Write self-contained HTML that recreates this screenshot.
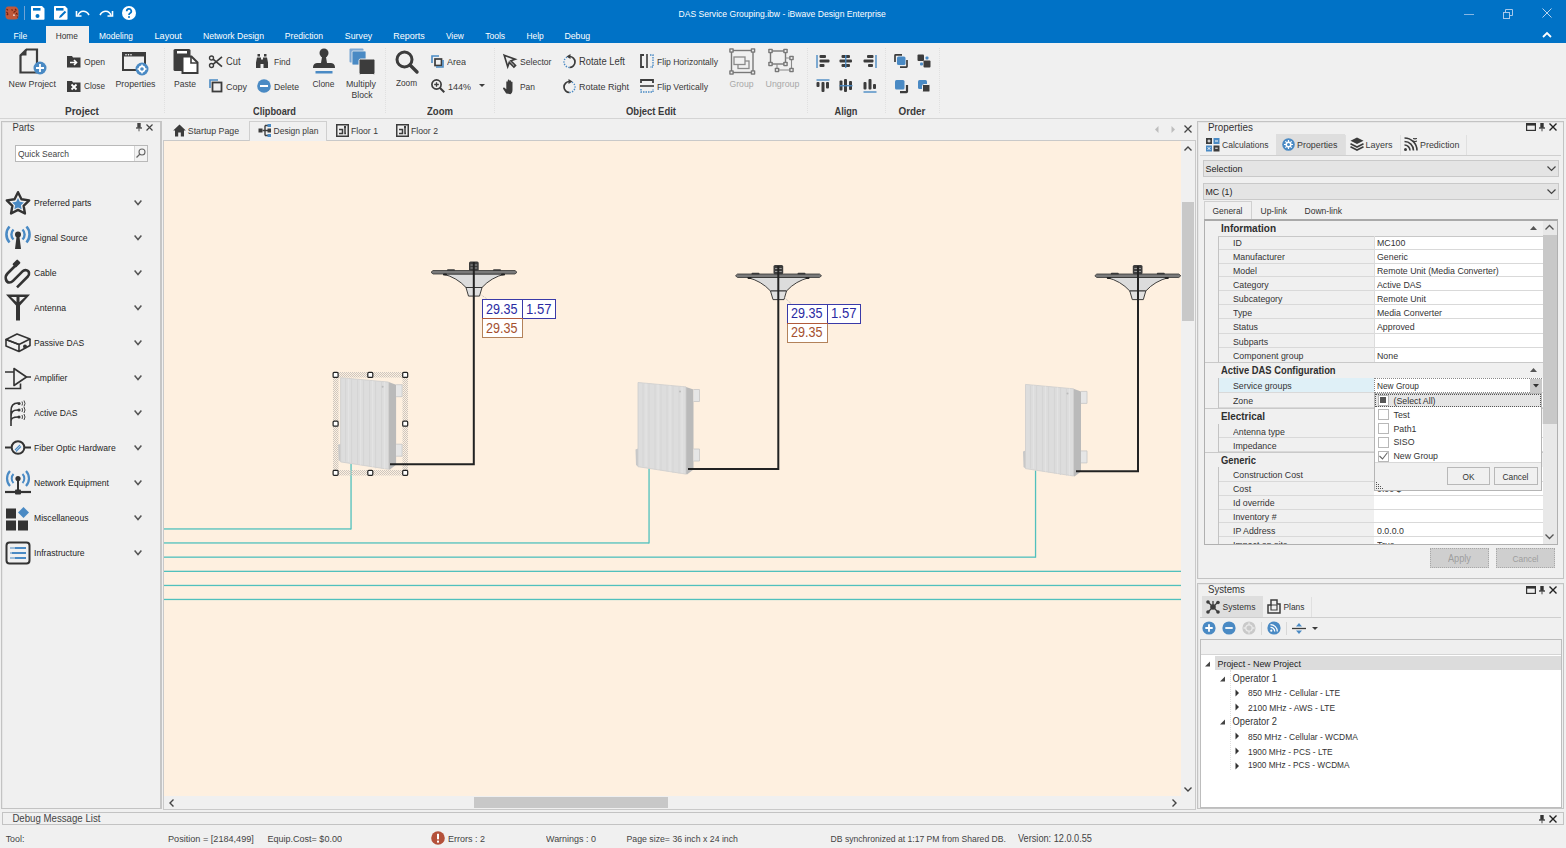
<!DOCTYPE html>
<html><head><meta charset="utf-8"><title>iBwave Design</title>
<style>
html,body{margin:0;padding:0;}
body{width:1566px;height:848px;position:relative;overflow:hidden;background:#f0f0f0;font-family:"Liberation Sans", sans-serif;}
svg{overflow:visible}
</style></head><body>
<div style="position:absolute;left:0px;top:0px;width:1566px;height:43px;background:#0072c6"></div>
<svg style="position:absolute;left:5px;top:6px" width="14" height="14" viewBox="0 0 14 14"><path d="M3 0.5h6.5c2 0 4 2 4 4.5v5c0 2.5-1.5 3.5-3.5 3.5h-6c-2 0-3.5-1.5-3.5-3.5v-6c0-2 1-3.5 2.5-3.5z" fill="#c0583a"/><path d="M1.5 2.8l1.5 1.5M1.5 6l1.3 1.3M1.8 9l1.5-1.2M6.5 3.5l1.2 1M10 3l1.5 1.5M8.5 6.5l2-1.5M11 7l1.5 1.5M9 9.5l1.5-1M12 10.5l.8 1" stroke="#6e2012" stroke-width="1.1"/><rect x="8" y="8.5" width="2.2" height="1.3" fill="#f3e6e0"/></svg>
<div style="position:absolute;left:23.5px;top:6px;width:1.5px;height:13.5px;background:#6fa3d6"></div>
<svg style="position:absolute;left:31px;top:6px" width="14" height="14" viewBox="0 0 14 14"><path d="M1 0h10l2.5 2.5v10.5a.8.8 0 0 1-.8.8h-11.9a.8.8 0 0 1-.8-.8v-12.2a.8.8 0 0 1 .8-.8z" fill="#fff"/><rect x="2" y="2" width="7.5" height="2.6" fill="#0072c6"/><circle cx="6.5" cy="10" r="2" fill="#0072c6"/></svg>
<svg style="position:absolute;left:54px;top:6px" width="14" height="14" viewBox="0 0 14 14"><path d="M1 0h10l2.5 2.5v10.5a.8.8 0 0 1-.8.8h-11.9a.8.8 0 0 1-.8-.8v-12.2a.8.8 0 0 1 .8-.8z" fill="#fff"/><rect x="2" y="2" width="7.5" height="2.6" fill="#0072c6"/><path d="M5 12l.8-2.2l5-5l1.4 1.4l-5 5z" fill="#0072c6"/></svg>
<svg style="position:absolute;left:76px;top:9px" width="14" height="8" viewBox="0 0 14 8"><path d="M2 6.5 C4 1 10 1 13 6" stroke="#fff" stroke-width="1.6" fill="none"/><path d="M0.5 2v5h5" stroke="#fff" stroke-width="1.6" fill="none"/></svg>
<svg style="position:absolute;left:99px;top:9px" width="14" height="8" viewBox="0 0 14 8"><path d="M12 6.5 C10 1 4 1 1 6" stroke="#fff" stroke-width="1.6" fill="none"/><path d="M13.5 2v5h-5" stroke="#fff" stroke-width="1.6" fill="none"/></svg>
<svg style="position:absolute;left:122px;top:6px" width="14" height="14" viewBox="0 0 14 14"><circle cx="7" cy="7" r="7" fill="#fff"/><path d="M4.7 5.2a2.3 2.3 0 1 1 3.3 2.1c-0.8 0.4-1 0.8-1 1.6" stroke="#0072c6" stroke-width="1.7" fill="none"/><circle cx="7" cy="11" r="1" fill="#0072c6"/></svg>
<div style="position:absolute;left:678.50px;top:6.90px;font-size:8.58px;line-height:14px;font-weight:normal;color:#ffffff;white-space:nowrap;transform:scaleY(1.09);">DAS Service Grouping.ibw - iBwave Design Enterprise</div>
<div style="position:absolute;left:1464px;top:14px;width:10px;height:1px;background:#86b6e3"></div>
<svg style="position:absolute;left:1503px;top:9px" width="10" height="10" viewBox="0 0 10 10"><rect x="0.5" y="3.5" width="6" height="6" fill="none" stroke="#a8c8ea" stroke-width="1"/><path d="M2.5 3.5v-3h7v6h-3" fill="none" stroke="#a8c8ea" stroke-width="1"/></svg>
<svg style="position:absolute;left:1542px;top:8px" width="10" height="10" viewBox="0 0 10 10"><path d="M0.5 0.5l9 9M9.5 0.5l-9 9" stroke="#b9d4ef" stroke-width="1"/></svg>
<div style="position:absolute;left:46px;top:26px;width:43px;height:17px;background:#f0f0f0"></div>
<div style="position:absolute;left:13.50px;top:29.40px;font-size:8.56px;line-height:14px;font-weight:normal;color:#ffffff;white-space:nowrap;transform:scaleY(1.09);">File</div>
<div style="position:absolute;left:55.70px;top:29.40px;font-size:8.32px;line-height:14px;font-weight:normal;color:#333333;white-space:nowrap;transform:scaleY(1.09);">Home</div>
<div style="position:absolute;left:99.00px;top:29.40px;font-size:8.38px;line-height:14px;font-weight:normal;color:#ffffff;white-space:nowrap;transform:scaleY(1.09);">Modeling</div>
<div style="position:absolute;left:154.50px;top:29.40px;font-size:9.12px;line-height:14px;font-weight:normal;color:#ffffff;white-space:nowrap;transform:scaleY(1.09);">Layout</div>
<div style="position:absolute;left:202.90px;top:29.40px;font-size:8.66px;line-height:14px;font-weight:normal;color:#ffffff;white-space:nowrap;transform:scaleY(1.09);">Network Design</div>
<div style="position:absolute;left:284.80px;top:29.40px;font-size:8.61px;line-height:14px;font-weight:normal;color:#ffffff;white-space:nowrap;transform:scaleY(1.09);">Prediction</div>
<div style="position:absolute;left:344.80px;top:29.40px;font-size:8.80px;line-height:14px;font-weight:normal;color:#ffffff;white-space:nowrap;transform:scaleY(1.09);">Survey</div>
<div style="position:absolute;left:393.30px;top:29.40px;font-size:8.97px;line-height:14px;font-weight:normal;color:#ffffff;white-space:nowrap;transform:scaleY(1.09);">Reports</div>
<div style="position:absolute;left:445.90px;top:29.40px;font-size:8.33px;line-height:14px;font-weight:normal;color:#ffffff;white-space:nowrap;transform:scaleY(1.09);">View</div>
<div style="position:absolute;left:485.20px;top:29.40px;font-size:8.56px;line-height:14px;font-weight:normal;color:#ffffff;white-space:nowrap;transform:scaleY(1.09);">Tools</div>
<div style="position:absolute;left:526.40px;top:29.40px;font-size:8.41px;line-height:14px;font-weight:normal;color:#ffffff;white-space:nowrap;transform:scaleY(1.09);">Help</div>
<div style="position:absolute;left:564.40px;top:29.40px;font-size:8.76px;line-height:14px;font-weight:normal;color:#ffffff;white-space:nowrap;transform:scaleY(1.09);">Debug</div>
<svg style="position:absolute;left:1542px;top:32px" width="10" height="6" viewBox="0 0 10 6"><path d="M1 5l4-4l4 4" stroke="#fff" stroke-width="1.8" fill="none"/></svg>
<div style="position:absolute;left:0px;top:118px;width:1566px;height:1px;background:#d4d4d4"></div>
<div style="position:absolute;left:164px;top:48px;width:1px;height:65px;border-left:1px dotted #e0e0e0"></div>
<div style="position:absolute;left:385px;top:48px;width:1px;height:65px;border-left:1px dotted #e0e0e0"></div>
<div style="position:absolute;left:494px;top:48px;width:1px;height:65px;border-left:1px dotted #e0e0e0"></div>
<div style="position:absolute;left:807px;top:48px;width:1px;height:65px;border-left:1px dotted #e0e0e0"></div>
<div style="position:absolute;left:885px;top:48px;width:1px;height:65px;border-left:1px dotted #e0e0e0"></div>
<div style="position:absolute;left:939px;top:48px;width:1px;height:65px;border-left:1px dotted #e0e0e0"></div>
<div style="position:absolute;left:65.00px;top:104.60px;font-size:10.03px;line-height:14px;font-weight:bold;color:#3a3a3a;white-space:nowrap;transform:scaleY(1.09);">Project</div>
<div style="position:absolute;left:253.00px;top:104.60px;font-size:9.21px;line-height:14px;font-weight:bold;color:#3a3a3a;white-space:nowrap;transform:scaleY(1.09);">Clipboard</div>
<div style="position:absolute;left:427.00px;top:104.60px;font-size:9.55px;line-height:14px;font-weight:bold;color:#3a3a3a;white-space:nowrap;transform:scaleY(1.09);">Zoom</div>
<div style="position:absolute;left:626.00px;top:104.60px;font-size:9.47px;line-height:14px;font-weight:bold;color:#3a3a3a;white-space:nowrap;transform:scaleY(1.09);">Object Edit</div>
<div style="position:absolute;left:834.50px;top:104.60px;font-size:9.20px;line-height:14px;font-weight:bold;color:#3a3a3a;white-space:nowrap;transform:scaleY(1.09);">Align</div>
<div style="position:absolute;left:898.50px;top:104.60px;font-size:9.91px;line-height:14px;font-weight:bold;color:#3a3a3a;white-space:nowrap;transform:scaleY(1.09);">Order</div>
<svg style="position:absolute;left:19px;top:48px" width="28" height="27" viewBox="0 0 28 27"><path d="M7 1.5h11v14M18 24.5h-16.5v-17l6-6" fill="none" stroke="#3c3c3c" stroke-width="2.2"/><path d="M1.5 7.5h6v-6z" fill="#3c3c3c"/><circle cx="21" cy="20" r="6.5" fill="#4a8ac4"/><path d="M21 16v8M17 20h8" stroke="#fff" stroke-width="1.8"/></svg>
<div style="position:absolute;left:8.60px;top:77.00px;font-size:8.79px;line-height:14px;font-weight:normal;color:#383838;white-space:nowrap;transform:scaleY(1.09);">New Project</div>
<svg style="position:absolute;left:67px;top:55px" width="14" height="13" viewBox="0 0 14 13"><path d="M0 1h5l1 1.5h7.5v10h-13.5z" fill="#3c3c3c"/><path d="M3 7.5h6M7 5l2.5 2.5L7 10" stroke="#fff" stroke-width="1.6" fill="none"/></svg>
<div style="position:absolute;left:84.00px;top:54.90px;font-size:8.58px;line-height:14px;font-weight:normal;color:#383838;white-space:nowrap;transform:scaleY(1.09);">Open</div>
<svg style="position:absolute;left:67px;top:80px" width="14" height="12" viewBox="0 0 14 12"><path d="M0 1h5l1 1.5h7.5v9.5h-13.5z" fill="#3c3c3c"/><path d="M4.5 4.5l5 5M9.5 4.5l-5 5" stroke="#fff" stroke-width="1.8"/></svg>
<div style="position:absolute;left:84.00px;top:79.80px;font-size:8.21px;line-height:14px;font-weight:normal;color:#383838;white-space:nowrap;transform:scaleY(1.09);">Close</div>
<svg style="position:absolute;left:122px;top:52px" width="28" height="24" viewBox="0 0 28 24"><rect x="1" y="1" width="22" height="17" fill="none" stroke="#3c3c3c" stroke-width="2"/><rect x="1" y="1" width="22" height="3.5" fill="#3c3c3c"/><circle cx="4" cy="2.8" r=".8" fill="#fff"/><circle cx="6.5" cy="2.8" r=".8" fill="#fff"/><circle cx="9" cy="2.8" r=".8" fill="#fff"/><circle cx="20" cy="17" r="6.5" fill="#4a8ac4"/><circle cx="20" cy="17" r="2.6" fill="none" stroke="#fff" stroke-width="1.6"/><path d="M20 12.5v2M20 19.5v2M15.5 17h2M22.5 17h2" stroke="#fff" stroke-width="1.4"/></svg>
<div style="position:absolute;left:115.50px;top:77.00px;font-size:8.78px;line-height:14px;font-weight:normal;color:#383838;white-space:nowrap;transform:scaleY(1.09);">Properties</div>
<svg style="position:absolute;left:173px;top:48px" width="27" height="27" viewBox="0 0 27 27"><rect x="0.5" y="1" width="17" height="22" rx="1.5" fill="#3c3c3c"/><rect x="4" y="3" width="10" height="2.5" fill="#fff"/><path d="M9.5 8.5h9l6 6v10.5h-15z" fill="#fff" stroke="#3c3c3c" stroke-width="2"/><path d="M18 8.5v6.5h6.5" fill="none" stroke="#3c3c3c" stroke-width="1.6"/></svg>
<div style="position:absolute;left:174.00px;top:77.20px;font-size:8.60px;line-height:14px;font-weight:normal;color:#383838;white-space:nowrap;transform:scaleY(1.09);">Paste</div>
<svg style="position:absolute;left:209px;top:55px" width="14" height="14" viewBox="0 0 14 14"><circle cx="2.5" cy="3" r="2" fill="none" stroke="#3c3c3c" stroke-width="1.4"/><circle cx="2.5" cy="10.5" r="2" fill="none" stroke="#3c3c3c" stroke-width="1.4"/><path d="M4 4.2l9 7.5M4 9.3l9-7.5" stroke="#3c3c3c" stroke-width="1.7"/></svg>
<div style="position:absolute;left:226.00px;top:54.90px;font-size:9.32px;line-height:14px;font-weight:normal;color:#383838;white-space:nowrap;transform:scaleY(1.09);">Cut</div>
<svg style="position:absolute;left:209px;top:79px" width="14" height="14" viewBox="0 0 14 14"><path d="M1 9v-8h8" fill="none" stroke="#4a8ac4" stroke-width="1.6"/><rect x="3.5" y="3.5" width="9" height="9" fill="none" stroke="#3c3c3c" stroke-width="1.8"/></svg>
<div style="position:absolute;left:226.00px;top:79.80px;font-size:8.99px;line-height:14px;font-weight:normal;color:#383838;white-space:nowrap;transform:scaleY(1.09);">Copy</div>
<svg style="position:absolute;left:256px;top:54px" width="12" height="14" viewBox="0 0 12 14"><rect x="1.5" y="0" width="2.5" height="2.5" fill="#3c3c3c"/><rect x="8" y="0" width="2.5" height="2.5" fill="#3c3c3c"/><path d="M1 3.5h4v2h2v-2h4l1 5v5.5h-4.5v-4h-3v4h-4.5v-5.5z" fill="#3c3c3c"/></svg>
<div style="position:absolute;left:274.00px;top:54.90px;font-size:8.48px;line-height:14px;font-weight:normal;color:#383838;white-space:nowrap;transform:scaleY(1.09);">Find</div>
<svg style="position:absolute;left:257px;top:79px" width="14" height="14" viewBox="0 0 14 14"><circle cx="7" cy="7" r="6.8" fill="#4a8ac4"/><rect x="3" y="6" width="8" height="2" fill="#fff"/></svg>
<div style="position:absolute;left:274.00px;top:79.80px;font-size:8.65px;line-height:14px;font-weight:normal;color:#383838;white-space:nowrap;transform:scaleY(1.09);">Delete</div>
<svg style="position:absolute;left:312px;top:48px" width="24" height="27" viewBox="0 0 24 27"><circle cx="12" cy="5" r="4.5" fill="#3c3c3c"/><path d="M10 9h4l1 6h-6z" fill="#3c3c3c"/><path d="M1 20c0-4 2-5 5-5h12c3 0 5 1 5 5z" fill="#3c3c3c"/><rect x="3.5" y="23" width="17" height="2.5" fill="#4a8ac4"/></svg>
<div style="position:absolute;left:312.50px;top:77.20px;font-size:8.42px;line-height:14px;font-weight:normal;color:#383838;white-space:nowrap;transform:scaleY(1.09);">Clone</div>
<svg style="position:absolute;left:349px;top:48px" width="27" height="27" viewBox="0 0 27 27"><rect x="0.5" y="0.5" width="14" height="14" rx="1" fill="#7ba7d4"/><rect x="3" y="3" width="14" height="14" rx="1" fill="#4a8ac4" stroke="#f0f0f0" stroke-width=".8"/><rect x="10" y="11" width="16" height="15.5" rx="1.5" fill="#3c3c3c" stroke="#f0f0f0" stroke-width="1"/></svg>
<div style="position:absolute;left:346.00px;top:77.00px;font-size:8.85px;line-height:14px;font-weight:normal;color:#383838;white-space:nowrap;transform:scaleY(1.09);">Multiply</div>
<div style="position:absolute;left:351.50px;top:88.10px;font-size:8.59px;line-height:14px;font-weight:normal;color:#383838;white-space:nowrap;transform:scaleY(1.09);">Block</div>
<svg style="position:absolute;left:395px;top:50px" width="24" height="24" viewBox="0 0 24 24"><circle cx="9.5" cy="9.5" r="7.5" fill="none" stroke="#3c3c3c" stroke-width="3"/><path d="M15 15l7 7" stroke="#3c3c3c" stroke-width="3.4" stroke-linecap="round"/></svg>
<div style="position:absolute;left:396.00px;top:77.00px;font-size:8.22px;line-height:14px;font-weight:normal;color:#383838;white-space:nowrap;transform:scaleY(1.09);">Zoom</div>
<svg style="position:absolute;left:431px;top:55px" width="13" height="13" viewBox="0 0 13 13"><path d="M1 8v-7h7" fill="none" stroke="#4a8ac4" stroke-width="1.6"/><rect x="4" y="4" width="6.5" height="6.5" fill="none" stroke="#3c3c3c" stroke-width="1.7"/><path d="M12 5v7h-7" fill="none" stroke="#4a8ac4" stroke-width="1.6"/></svg>
<div style="position:absolute;left:447.00px;top:54.90px;font-size:8.99px;line-height:14px;font-weight:normal;color:#383838;white-space:nowrap;transform:scaleY(1.09);">Area</div>
<svg style="position:absolute;left:431px;top:79px" width="14" height="14" viewBox="0 0 14 14"><circle cx="5.5" cy="5.5" r="4.6" fill="none" stroke="#3c3c3c" stroke-width="1.7"/><path d="M8.8 8.8l4.5 4.5" stroke="#3c3c3c" stroke-width="2"/><path d="M5.5 3.2v4.6M3.2 5.5h4.6" stroke="#3c3c3c" stroke-width="1.3"/></svg>
<div style="position:absolute;left:448.00px;top:79.80px;font-size:8.99px;line-height:14px;font-weight:normal;color:#383838;white-space:nowrap;transform:scaleY(1.09);">144%</div>
<svg style="position:absolute;left:479px;top:84px" width="6" height="4" viewBox="0 0 6 4"><path d="M0 0h6l-3 3z" fill="#3c3c3c"/></svg>
<svg style="position:absolute;left:503px;top:54px" width="14" height="14" viewBox="0 0 14 14"><path d="M1.2 1.2l11 4l-4.3 1.6l4.6 4.6l-1.6 1.6l-4.6-4.6l-1.6 4.3z" fill="none" stroke="#3c3c3c" stroke-width="1.7" stroke-linejoin="miter"/></svg>
<div style="position:absolute;left:520.00px;top:54.90px;font-size:8.59px;line-height:14px;font-weight:normal;color:#383838;white-space:nowrap;transform:scaleY(1.09);">Selector</div>
<svg style="position:absolute;left:503px;top:79px" width="14" height="15" viewBox="0 0 14 15"><path d="M3.2 14.5l-3-4.5c-.6-.9.4-1.9 1.3-1.2l1.8 1.5v-7.3c0-1 1.5-1 1.5 0v5.5v-7.3c0-1 1.6-1 1.6 0v7.3v-6.5c0-1 1.6-1 1.6 0v6.5v-5.3c0-1 1.5-1 1.5 0v7.8c0 2.2-.9 3.5-2 4.2z" fill="#3c3c3c"/></svg>
<div style="position:absolute;left:520.00px;top:79.80px;font-size:8.43px;line-height:14px;font-weight:normal;color:#383838;white-space:nowrap;transform:scaleY(1.09);">Pan</div>
<svg style="position:absolute;left:563px;top:54px" width="13" height="14" viewBox="0 0 13 14"><path d="M6.5 2.5a5.5 5.5 0 0 1 0 11" fill="none" stroke="#3c3c3c" stroke-width="1.7"/><path d="M6.5 13.5a5.5 5.5 0 0 1 0-11" fill="none" stroke="#4a8ac4" stroke-width="1.4" stroke-dasharray="1.3 1.3"/><path d="M7.5 0l-4 2.5l4 2.5z" fill="#3c3c3c"/></svg>
<div style="position:absolute;left:579.00px;top:54.90px;font-size:9.40px;line-height:14px;font-weight:normal;color:#383838;white-space:nowrap;transform:scaleY(1.09);">Rotate Left</div>
<svg style="position:absolute;left:563px;top:79px" width="13" height="14" viewBox="0 0 13 14"><path d="M6.5 2.5a5.5 5.5 0 0 0 0 11" fill="none" stroke="#3c3c3c" stroke-width="1.7"/><path d="M6.5 13.5a5.5 5.5 0 0 0 0-11" fill="none" stroke="#4a8ac4" stroke-width="1.4" stroke-dasharray="1.3 1.3"/><path d="M5.5 0l4 2.5l-4 2.5z" fill="#3c3c3c"/></svg>
<div style="position:absolute;left:579.00px;top:79.80px;font-size:8.99px;line-height:14px;font-weight:normal;color:#383838;white-space:nowrap;transform:scaleY(1.09);">Rotate Right</div>
<svg style="position:absolute;left:640px;top:54px" width="14" height="14" viewBox="0 0 14 14"><path d="M4 1h-3v12h3" fill="none" stroke="#3c3c3c" stroke-width="1.8"/><path d="M7 0v14" stroke="#3c3c3c" stroke-width="1.6"/><path d="M10 1h3v12h-3" fill="none" stroke="#4a8ac4" stroke-width="1.4" stroke-dasharray="1.5 1"/></svg>
<div style="position:absolute;left:657.00px;top:54.90px;font-size:8.57px;line-height:14px;font-weight:normal;color:#383838;white-space:nowrap;transform:scaleY(1.09);">Flip Horizontally</div>
<svg style="position:absolute;left:640px;top:79px" width="14" height="14" viewBox="0 0 14 14"><path d="M1 4v-3h12v3" fill="none" stroke="#3c3c3c" stroke-width="1.8"/><path d="M0 7h14" stroke="#3c3c3c" stroke-width="1.6"/><path d="M1 10v3h12v-3" fill="none" stroke="#4a8ac4" stroke-width="1.4" stroke-dasharray="1.5 1"/></svg>
<div style="position:absolute;left:657.00px;top:79.80px;font-size:8.66px;line-height:14px;font-weight:normal;color:#383838;white-space:nowrap;transform:scaleY(1.09);">Flip Vertically</div>
<svg style="position:absolute;left:729px;top:48px" width="27" height="27" viewBox="0 0 27 27"><rect x="2.5" y="2.5" width="21.5" height="22" fill="none" stroke="#787878" stroke-width="1.4"/><rect x="0.20000000000000018" y="0.20000000000000018" width="4.6" height="4.6" rx="0.8" fill="#787878"/><rect x="1.6" y="1.6" width="1.8" height="1.8" fill="#f0f0f0"/><rect x="21.7" y="0.20000000000000018" width="4.6" height="4.6" rx="0.8" fill="#787878"/><rect x="23.1" y="1.6" width="1.8" height="1.8" fill="#f0f0f0"/><rect x="0.20000000000000018" y="22.2" width="4.6" height="4.6" rx="0.8" fill="#787878"/><rect x="1.6" y="23.6" width="1.8" height="1.8" fill="#f0f0f0"/><rect x="21.7" y="22.2" width="4.6" height="4.6" rx="0.8" fill="#787878"/><rect x="23.1" y="23.6" width="1.8" height="1.8" fill="#f0f0f0"/><rect x="9" y="13" width="11" height="7.5" fill="none" stroke="#8a8a8a" stroke-width="1.3"/><rect x="5" y="9" width="11" height="7.5" fill="#f0f0f0" stroke="#8a8a8a" stroke-width="1.3"/></svg>
<div style="position:absolute;left:729.50px;top:77.00px;font-size:8.63px;line-height:14px;font-weight:normal;color:#a8a8a8;white-space:nowrap;transform:scaleY(1.09);">Group</div>
<svg style="position:absolute;left:769px;top:48px" width="26" height="27" viewBox="0 0 26 27"><rect x="1.5" y="3" width="15" height="13" fill="none" stroke="#787878" stroke-width="1.4"/><path d="M16.5 10h6v12h-14.5v-6" fill="none" stroke="#8a8a8a" stroke-width="1.1"/><rect x="-0.7999999999999998" y="0.7000000000000002" width="4.6" height="4.6" rx="0.8" fill="#787878"/><rect x="0.6" y="2.1" width="1.8" height="1.8" fill="#f0f0f0"/><rect x="14.2" y="0.7000000000000002" width="4.6" height="4.6" rx="0.8" fill="#787878"/><rect x="15.6" y="2.1" width="1.8" height="1.8" fill="#f0f0f0"/><rect x="-0.7999999999999998" y="13.7" width="4.6" height="4.6" rx="0.8" fill="#787878"/><rect x="0.6" y="15.1" width="1.8" height="1.8" fill="#f0f0f0"/><rect x="14.2" y="13.7" width="4.6" height="4.6" rx="0.8" fill="#787878"/><rect x="15.6" y="15.1" width="1.8" height="1.8" fill="#f0f0f0"/><rect x="20.2" y="7.7" width="4.6" height="4.6" rx="0.8" fill="#787878"/><rect x="21.6" y="9.1" width="1.8" height="1.8" fill="#f0f0f0"/><rect x="20.2" y="19.7" width="4.6" height="4.6" rx="0.8" fill="#787878"/><rect x="21.6" y="21.1" width="1.8" height="1.8" fill="#f0f0f0"/><rect x="5.7" y="19.7" width="4.6" height="4.6" rx="0.8" fill="#787878"/><rect x="7.1" y="21.1" width="1.8" height="1.8" fill="#f0f0f0"/></svg>
<div style="position:absolute;left:765.50px;top:77.00px;font-size:8.86px;line-height:14px;font-weight:normal;color:#a8a8a8;white-space:nowrap;transform:scaleY(1.09);">Ungroup</div>
<svg style="position:absolute;left:816px;top:54px" width="14" height="14" viewBox="0 0 14 14"><rect x="0.3" y="1" width="1.4" height="13" fill="#4a8ac4"/><rect x="3.5" y="1" width="6.5" height="3" rx="1" fill="#3c3c3c"/><rect x="3.5" y="5.5" width="10" height="3" rx="1" fill="#3c3c3c"/><rect x="3.5" y="10" width="5" height="3" rx="1" fill="#3c3c3c"/></svg>
<svg style="position:absolute;left:839px;top:54px" width="14" height="14" viewBox="0 0 14 14"><rect x="2.5" y="1" width="8.5" height="3" rx="1" fill="#3c3c3c"/><rect x="0.5" y="5.5" width="12.5" height="3" rx="1" fill="#3c3c3c"/><rect x="2.5" y="10" width="8.5" height="3" rx="1" fill="#3c3c3c"/><rect x="6.1" y="1" width="1.3" height="13" fill="#4a8ac4"/></svg>
<svg style="position:absolute;left:863px;top:54px" width="14" height="14" viewBox="0 0 14 14"><rect x="12.3" y="1" width="1.4" height="13" fill="#4a8ac4"/><rect x="4" y="1" width="6.5" height="3" rx="1" fill="#3c3c3c"/><rect x="0.5" y="5.5" width="10" height="3" rx="1" fill="#3c3c3c"/><rect x="5" y="10" width="5" height="3" rx="1" fill="#3c3c3c"/></svg>
<svg style="position:absolute;left:816px;top:79px" width="14" height="14" viewBox="0 0 14 14"><rect x="0.5" y="0.3" width="13" height="1.4" fill="#4a8ac4"/><rect x="0.5" y="3" width="3" height="5" rx="1" fill="#3c3c3c"/><rect x="5.5" y="3" width="3" height="10" rx="1" fill="#3c3c3c"/><rect x="10" y="3" width="3" height="6.5" rx="1" fill="#3c3c3c"/></svg>
<svg style="position:absolute;left:839px;top:79px" width="14" height="14" viewBox="0 0 14 14"><rect x="0.5" y="1.5" width="3" height="10" rx="1" fill="#3c3c3c"/><rect x="5" y="0" width="3" height="13" rx="1" fill="#3c3c3c"/><rect x="10" y="2" width="3" height="9" rx="1" fill="#3c3c3c"/><rect x="0.5" y="6.1" width="13" height="1.3" fill="#4a8ac4"/></svg>
<svg style="position:absolute;left:863px;top:79px" width="14" height="14" viewBox="0 0 14 14"><rect x="0.5" y="12.3" width="13" height="1.4" fill="#4a8ac4"/><rect x="0.5" y="3" width="3" height="7.5" rx="1" fill="#3c3c3c"/><rect x="5.5" y="0" width="3" height="10.5" rx="1" fill="#3c3c3c"/><rect x="10" y="5" width="3" height="5" rx="1" fill="#3c3c3c"/></svg>
<svg style="position:absolute;left:894px;top:54px" width="14" height="14" viewBox="0 0 14 14"><path d="M1 8v-6.5a.6.6 0 0 1 .6-.6h6.4" fill="none" stroke="#3c3c3c" stroke-width="1.7"/><path d="M13 6v6.5a.6.6 0 0 1-.6.6h-6.4" fill="none" stroke="#3c3c3c" stroke-width="1.7"/><rect x="3" y="2.5" width="8.5" height="8.5" rx="1.5" fill="#4a8ac4"/></svg>
<svg style="position:absolute;left:917px;top:54px" width="14" height="14" viewBox="0 0 14 14"><rect x="0.5" y="0.5" width="6.5" height="6.5" rx="1" fill="#3c3c3c"/><rect x="6.5" y="6.5" width="7" height="7" rx="1" fill="#3c3c3c"/><rect x="8.5" y="2.5" width="3" height="3" rx="1" fill="#4a8ac4"/><rect x="3" y="8.5" width="3" height="3" rx="1" fill="#4a8ac4"/></svg>
<svg style="position:absolute;left:894px;top:79px" width="14" height="14" viewBox="0 0 14 14"><path d="M13 6v6.5a.6.6 0 0 1-.6.6h-6.4" fill="none" stroke="#3c3c3c" stroke-width="2.2"/><rect x="1" y="1" width="9.5" height="9.5" rx="1.5" fill="#4a8ac4"/></svg>
<svg style="position:absolute;left:917px;top:79px" width="14" height="14" viewBox="0 0 14 14"><rect x="1" y="1" width="9" height="9" rx="1.5" fill="#4a8ac4"/><rect x="5.5" y="5.5" width="7.5" height="7.5" rx="1" fill="#3c3c3c" stroke="#f0f0f0" stroke-width="1"/></svg>
<div style="position:absolute;left:1px;top:121px;width:161px;height:688px;border:1px solid #c3c3c3;border-right:2px solid #c6c6c6;box-shadow:inset 1px 1px 0 #e6e6e6;box-sizing:border-box;background:#f0f0f0"></div>
<div style="position:absolute;left:12.40px;top:121.00px;font-size:9.42px;line-height:14px;font-weight:normal;color:#3a3a3a;white-space:nowrap;transform:scaleY(1.09);">Parts</div>
<svg style="position:absolute;left:136px;top:123px" width="6" height="8" viewBox="0 0 6 8"><rect x="1.3" y="0" width="3.4" height="4.8" fill="#444"/><path d="M0 5h6" stroke="#444" stroke-width="1.3"/><path d="M3 5.5v2.8" stroke="#555" stroke-width="1"/></svg>
<svg style="position:absolute;left:146px;top:124px" width="7" height="7" viewBox="0 0 7 7"><path d="M0.5 0.5l6 6M6.5 0.5l-6 6" stroke="#444" stroke-width="1.2"/></svg>
<div style="position:absolute;left:15px;top:145px;width:133px;height:17px;background:#fff;border:1px solid #b9b9b9;box-sizing:border-box"></div>
<div style="position:absolute;left:134px;top:146px;width:1px;height:15px;background:#d6d6d6"></div>
<div style="position:absolute;left:135px;top:146px;width:12px;height:15px;background:#f3f3f3"></div>
<svg style="position:absolute;left:136px;top:148px" width="10" height="10" viewBox="0 0 10 10"><circle cx="6" cy="4" r="3" fill="none" stroke="#666" stroke-width="1.1"/><path d="M4 6l-3.5 3.5" stroke="#666" stroke-width="1.2"/></svg>
<div style="position:absolute;left:18.00px;top:146.90px;font-size:8.50px;line-height:14px;font-weight:normal;color:#444;white-space:nowrap;transform:scaleY(1.09);">Quick Search</div>
<div style="position:absolute;left:34.00px;top:195.60px;font-size:8.60px;line-height:14px;font-weight:normal;color:#1e1e1e;white-space:nowrap;transform:scaleY(1.09);">Preferred parts</div>
<svg style="position:absolute;left:133.8px;top:199.7px" width="8" height="6" viewBox="0 0 8 6"><path d="M0.6 0.6l3.4 3.9l3.4-3.9" stroke="#555" stroke-width="1.5" fill="none"/></svg>
<div style="position:absolute;left:34.00px;top:230.60px;font-size:8.60px;line-height:14px;font-weight:normal;color:#1e1e1e;white-space:nowrap;transform:scaleY(1.09);">Signal Source</div>
<svg style="position:absolute;left:133.8px;top:234.7px" width="8" height="6" viewBox="0 0 8 6"><path d="M0.6 0.6l3.4 3.9l3.4-3.9" stroke="#555" stroke-width="1.5" fill="none"/></svg>
<div style="position:absolute;left:34.00px;top:265.60px;font-size:8.60px;line-height:14px;font-weight:normal;color:#1e1e1e;white-space:nowrap;transform:scaleY(1.09);">Cable</div>
<svg style="position:absolute;left:133.8px;top:269.7px" width="8" height="6" viewBox="0 0 8 6"><path d="M0.6 0.6l3.4 3.9l3.4-3.9" stroke="#555" stroke-width="1.5" fill="none"/></svg>
<div style="position:absolute;left:34.00px;top:300.60px;font-size:8.60px;line-height:14px;font-weight:normal;color:#1e1e1e;white-space:nowrap;transform:scaleY(1.09);">Antenna</div>
<svg style="position:absolute;left:133.8px;top:304.7px" width="8" height="6" viewBox="0 0 8 6"><path d="M0.6 0.6l3.4 3.9l3.4-3.9" stroke="#555" stroke-width="1.5" fill="none"/></svg>
<div style="position:absolute;left:34.00px;top:335.60px;font-size:8.60px;line-height:14px;font-weight:normal;color:#1e1e1e;white-space:nowrap;transform:scaleY(1.09);">Passive DAS</div>
<svg style="position:absolute;left:133.8px;top:339.7px" width="8" height="6" viewBox="0 0 8 6"><path d="M0.6 0.6l3.4 3.9l3.4-3.9" stroke="#555" stroke-width="1.5" fill="none"/></svg>
<div style="position:absolute;left:34.00px;top:370.60px;font-size:8.60px;line-height:14px;font-weight:normal;color:#1e1e1e;white-space:nowrap;transform:scaleY(1.09);">Amplifier</div>
<svg style="position:absolute;left:133.8px;top:374.7px" width="8" height="6" viewBox="0 0 8 6"><path d="M0.6 0.6l3.4 3.9l3.4-3.9" stroke="#555" stroke-width="1.5" fill="none"/></svg>
<div style="position:absolute;left:34.00px;top:405.60px;font-size:8.60px;line-height:14px;font-weight:normal;color:#1e1e1e;white-space:nowrap;transform:scaleY(1.09);">Active DAS</div>
<svg style="position:absolute;left:133.8px;top:409.7px" width="8" height="6" viewBox="0 0 8 6"><path d="M0.6 0.6l3.4 3.9l3.4-3.9" stroke="#555" stroke-width="1.5" fill="none"/></svg>
<div style="position:absolute;left:34.00px;top:440.60px;font-size:8.60px;line-height:14px;font-weight:normal;color:#1e1e1e;white-space:nowrap;transform:scaleY(1.09);">Fiber Optic Hardware</div>
<svg style="position:absolute;left:133.8px;top:444.7px" width="8" height="6" viewBox="0 0 8 6"><path d="M0.6 0.6l3.4 3.9l3.4-3.9" stroke="#555" stroke-width="1.5" fill="none"/></svg>
<div style="position:absolute;left:34.00px;top:475.60px;font-size:8.60px;line-height:14px;font-weight:normal;color:#1e1e1e;white-space:nowrap;transform:scaleY(1.09);">Network Equipment</div>
<svg style="position:absolute;left:133.8px;top:479.7px" width="8" height="6" viewBox="0 0 8 6"><path d="M0.6 0.6l3.4 3.9l3.4-3.9" stroke="#555" stroke-width="1.5" fill="none"/></svg>
<div style="position:absolute;left:34.00px;top:510.60px;font-size:8.60px;line-height:14px;font-weight:normal;color:#1e1e1e;white-space:nowrap;transform:scaleY(1.09);">Miscellaneous</div>
<svg style="position:absolute;left:133.8px;top:514.7px" width="8" height="6" viewBox="0 0 8 6"><path d="M0.6 0.6l3.4 3.9l3.4-3.9" stroke="#555" stroke-width="1.5" fill="none"/></svg>
<div style="position:absolute;left:34.00px;top:545.60px;font-size:8.60px;line-height:14px;font-weight:normal;color:#1e1e1e;white-space:nowrap;transform:scaleY(1.09);">Infrastructure</div>
<svg style="position:absolute;left:133.8px;top:549.7px" width="8" height="6" viewBox="0 0 8 6"><path d="M0.6 0.6l3.4 3.9l3.4-3.9" stroke="#555" stroke-width="1.5" fill="none"/></svg>
<svg style="position:absolute;left:5px;top:190px" width="26" height="26" viewBox="0 0 26 26"><path d="M13.00 2.20 L16.47 9.23 L24.22 10.35 L18.61 15.82 L19.94 23.55 L13.00 19.90 L6.06 23.55 L7.39 15.82 L1.78 10.35 L9.53 9.23Z" fill="none" stroke="#333" stroke-width="2.4" stroke-linejoin="round"/><path d="M13.00 8.10 L14.82 11.79 L18.90 12.38 L15.95 15.26 L16.64 19.32 L13.00 17.40 L9.36 19.32 L10.05 15.26 L7.10 12.38 L11.18 11.79Z" fill="#4a8ac4"/></svg>
<svg style="position:absolute;left:5px;top:224px" width="26" height="26" viewBox="0 0 26 26"><path d="M4.5 2.5a12 12 0 0 0 0 16M21.5 2.5a12 12 0 0 1 0 16" fill="none" stroke="#4a8ac4" stroke-width="2.6"/><path d="M8.5 5.5a7 7 0 0 0 0 10M17.5 5.5a7 7 0 0 1 0 10" fill="none" stroke="#4a8ac4" stroke-width="2.4"/><circle cx="13" cy="10.5" r="3" fill="#333"/><path d="M11.6 12h2.8l1.6 13h-6z" fill="#333"/></svg>
<svg style="position:absolute;left:5px;top:259px" width="26" height="27" viewBox="0 0 26 27"><path d="M11 6L2.5 14.5C-0.5 17.5 0.5 23.5 4.5 23.5C6 23.5 7 22.8 8 21.8L17.5 12.3C19.5 10.3 23.5 10.8 24 13.8C24.3 15.5 23.8 16.5 22.8 17.5L12 28.3" fill="none" stroke="#333" stroke-width="2.6"/><rect x="9" y="1" width="5" height="7" rx="1" transform="rotate(45 11.5 4.5)" fill="#333"/></svg>
<svg style="position:absolute;left:5px;top:294px" width="26" height="27" viewBox="0 0 26 27"><path d="M1 0.5h24l-10 11v15h-4v-15z" fill="#333"/><path d="M6 3h5.5v5zM14.5 3h5.5l-5.5 5z" fill="#f0f0f0"/></svg>
<svg style="position:absolute;left:5px;top:333px" width="26" height="20" viewBox="0 0 26 20"><path d="M1 6.5l11-5.5l13 5l-11 5.5z" fill="none" stroke="#333" stroke-width="1.6" stroke-linejoin="round"/><path d="M1 6.5v6.5l13 5.5v-7zM25 6v6.5l-11 6" fill="none" stroke="#333" stroke-width="1.6" stroke-linejoin="round"/><circle cx="20" cy="13.5" r="2" fill="#333"/></svg>
<svg style="position:absolute;left:5px;top:367px" width="26" height="23" viewBox="0 0 26 23"><path d="M9 1.5l12.5 8.5l-12.5 8.5z" fill="none" stroke="#333" stroke-width="1.6" stroke-linejoin="round"/><path d="M0 5h9M21.5 10h4.5M0 21.5h15.5v-5" fill="none" stroke="#333" stroke-width="1.6"/></svg>
<svg style="position:absolute;left:10px;top:400px" width="17" height="27" viewBox="0 0 17 27"><path d="M1 26v-15c0-5 2-8 7-8M1 17c0-5 1.5-7 7-7M1 21c0-3 2-4 7-4" fill="none" stroke="#333" stroke-width="1.6"/><circle cx="9" cy="3.5" r="1.6" fill="#333"/><circle cx="9" cy="10" r="1.6" fill="#333"/><circle cx="9" cy="17" r="1.6" fill="#333"/><path d="M12 1.5q1 2 0 4M14 0.5q2 3 0 6M12 8q1 2 0 4M14 7q2 3 0 6M12 15q1 2 0 4M14 14q2 3 0 6" fill="none" stroke="#333" stroke-width=".9"/></svg>
<svg style="position:absolute;left:5px;top:440px" width="26" height="15" viewBox="0 0 26 15"><circle cx="13" cy="7.5" r="6.3" fill="none" stroke="#333" stroke-width="2"/><path d="M0 7.5h6.5M19.5 7.5h6.5" stroke="#333" stroke-width="2"/><path d="M10 10l5-5M11 11.5l5-5" stroke="#4a8ac4" stroke-width="1.1"/></svg>
<svg style="position:absolute;left:5px;top:469px" width="26" height="26" viewBox="0 0 26 26"><path d="M5 2a11 11 0 0 0 0 15M21 2a11 11 0 0 1 0 15" fill="none" stroke="#4a8ac4" stroke-width="2.2"/><path d="M8.5 5a6.5 6.5 0 0 0 0 9M17.5 5a6.5 6.5 0 0 1 0 9" fill="none" stroke="#4a8ac4" stroke-width="2"/><circle cx="13" cy="9.5" r="2.6" fill="#333"/><path d="M13 11v11" stroke="#333" stroke-width="2"/><path d="M0 23h26" stroke="#333" stroke-width="2.2"/><rect x="10" y="20.5" width="6" height="5" rx="1" fill="#333"/></svg>
<svg style="position:absolute;left:5px;top:507px" width="24" height="24" viewBox="0 0 24 24"><rect x="1" y="1.5" width="10" height="10" fill="#333"/><rect x="1" y="13.5" width="10" height="10" fill="#333"/><rect x="13" y="13.5" width="10" height="10" fill="#333"/><path d="M18.5 0l5.5 5.5l-5.5 5.5l-5.5-5.5z" fill="#4a8ac4"/></svg>
<svg style="position:absolute;left:5px;top:541px" width="26" height="24" viewBox="0 0 26 24"><rect x="1.5" y="1.5" width="23" height="21" rx="3" fill="none" stroke="#333" stroke-width="2"/><path d="M5 7h16M5 12h16M5 17h16" stroke="#4a8ac4" stroke-width="1.8"/><path d="M4 7h6M4 12h3M4 17h6" stroke="#f0f0f0" stroke-width="2.3"/><path d="M5 7h16M5 12h16M5 17h16" stroke="#4a8ac4" stroke-width="1.2"/></svg>
<div style="position:absolute;left:163px;top:140px;width:1033px;height:670px;border:1px solid #c9c9c9;box-sizing:border-box;background:#f0f0f0"></div>
<div style="position:absolute;left:164px;top:141px;width:1017px;height:655px;background:#fef0e0"></div>
<div style="position:absolute;left:163px;top:140px;width:1033px;height:1px;background:#c9c9c9"></div>
<div style="position:absolute;left:249px;top:121px;width:78px;height:20px;border:1px solid #cfcfcf;border-bottom:none;box-sizing:border-box;background:#f0f0f0"></div>
<svg style="position:absolute;left:173px;top:124px" width="13" height="13" viewBox="0 0 13 13"><path d="M6.5 0.5l6.3 6h-1.8v6h-3.2v-4h-2.6v4h-3.2v-6h-1.8z" fill="#3c3c3c"/></svg>
<div style="position:absolute;left:187.80px;top:124.40px;font-size:8.81px;line-height:14px;font-weight:normal;color:#3a3a3a;white-space:nowrap;transform:scaleY(1.09);">Startup Page</div>
<svg style="position:absolute;left:258px;top:124px" width="14" height="13" viewBox="0 0 14 13"><rect x="0.5" y="4.5" width="4" height="4" fill="#3c3c3c"/><path d="M4.5 6.5h2M7 1.5v10" stroke="#3c3c3c" stroke-width="1.4" fill="none"/><path d="M7 1.5h3M7 11.5h3" stroke="#3c3c3c" stroke-width="1.4"/><rect x="9.5" y="0" width="3.5" height="3" fill="#4a8ac4"/><rect x="9.5" y="4.5" width="3.5" height="4" fill="#3c3c3c"/><rect x="9.5" y="10" width="3.5" height="3" fill="#4a8ac4"/><path d="M7 6.5h3" stroke="#3c3c3c" stroke-width="1.4"/></svg>
<div style="position:absolute;left:273.50px;top:124.40px;font-size:8.52px;line-height:14px;font-weight:normal;color:#3a3a3a;white-space:nowrap;transform:scaleY(1.09);">Design plan</div>
<svg style="position:absolute;left:336px;top:124px" width="13" height="13" viewBox="0 0 13 13"><rect x="0.75" y="0.75" width="11.5" height="11.5" fill="none" stroke="#3c3c3c" stroke-width="1.5"/><path d="M3 9.5h3.5v-4h-3.5M9 3v6.5h1" fill="none" stroke="#3c3c3c" stroke-width="1.5"/><rect x="8" y="2" width="2" height="2" fill="#3c3c3c"/></svg>
<div style="position:absolute;left:351.00px;top:124.40px;font-size:8.67px;line-height:14px;font-weight:normal;color:#3a3a3a;white-space:nowrap;transform:scaleY(1.09);">Floor 1</div>
<svg style="position:absolute;left:396px;top:124px" width="13" height="13" viewBox="0 0 13 13"><rect x="0.75" y="0.75" width="11.5" height="11.5" fill="none" stroke="#3c3c3c" stroke-width="1.5"/><path d="M3 9.5h3.5v-4h-3.5M9 3v6.5h1" fill="none" stroke="#3c3c3c" stroke-width="1.5"/><rect x="8" y="2" width="2" height="2" fill="#3c3c3c"/></svg>
<div style="position:absolute;left:411.00px;top:124.40px;font-size:8.67px;line-height:14px;font-weight:normal;color:#3a3a3a;white-space:nowrap;transform:scaleY(1.09);">Floor 2</div>
<svg style="position:absolute;left:1155px;top:126px" width="4" height="7" viewBox="0 0 4 7"><path d="M3.5 0l-3.5 3.5l3.5 3.5z" fill="#bdbdbd"/></svg>
<svg style="position:absolute;left:1171px;top:126px" width="4" height="7" viewBox="0 0 4 7"><path d="M0.5 0l3.5 3.5l-3.5 3.5z" fill="#bdbdbd"/></svg>
<svg style="position:absolute;left:1184px;top:125px" width="8" height="8" viewBox="0 0 8 8"><path d="M0.5 0.5l7 7M7.5 0.5l-7 7" stroke="#444" stroke-width="1.3"/></svg>
<div style="position:absolute;left:1181px;top:141px;width:14px;height:655px;background:#f0f0f0"></div>
<div style="position:absolute;left:1182px;top:202px;width:12px;height:119px;background:#c8c8c8"></div>
<svg style="position:absolute;left:1184px;top:146px" width="8" height="5" viewBox="0 0 8 5"><path d="M0.5 4.5l3.5-3.5l3.5 3.5" stroke="#444" stroke-width="1.4" fill="none"/></svg>
<svg style="position:absolute;left:1184px;top:787px" width="8" height="5" viewBox="0 0 8 5"><path d="M0.5 0.5l3.5 3.5l3.5-3.5" stroke="#444" stroke-width="1.4" fill="none"/></svg>
<div style="position:absolute;left:164px;top:796px;width:1017px;height:13px;background:#f0f0f0"></div>
<div style="position:absolute;left:474px;top:797px;width:194px;height:11px;background:#c8c8c8"></div>
<svg style="position:absolute;left:169px;top:799px" width="5" height="8" viewBox="0 0 5 8"><path d="M4.5 0.5l-3.5 3.5l3.5 3.5" stroke="#444" stroke-width="1.4" fill="none"/></svg>
<svg style="position:absolute;left:1172px;top:799px" width="5" height="8" viewBox="0 0 5 8"><path d="M0.5 0.5l3.5 3.5l-3.5 3.5" stroke="#444" stroke-width="1.4" fill="none"/></svg>
<svg style="position:absolute;left:0;top:0;clip-path:inset(141px 385px 52px 164px)" width="1566" height="848" viewBox="0 0 1566 848"><rect x="164" y="528.3" width="187" height="1.3" fill="#50c0bd"/><rect x="350.4" y="464" width="1.3" height="65.5" fill="#50c0bd"/><rect x="164" y="542.3" width="485" height="1.3" fill="#50c0bd"/><rect x="648.4" y="468.5" width="1.3" height="75.0" fill="#50c0bd"/><rect x="164" y="556.5" width="871.5" height="1.3" fill="#50c0bd"/><rect x="1034.9" y="470.5" width="1.3" height="87.20000000000005" fill="#50c0bd"/><rect x="164" y="570.7" width="1017" height="1.3" fill="#50c0bd"/><rect x="164" y="584.8" width="1017" height="1.3" fill="#50c0bd"/><rect x="164" y="598.8" width="1017" height="1.3" fill="#50c0bd"/><defs><pattern id="hatch" width="2" height="2" patternUnits="userSpaceOnUse"><rect width="1" height="1" fill="#cdc6bf"/><rect x="1" y="1" width="1" height="1" fill="#cdc6bf"/></pattern></defs><path d="M333 372h75v5.5h-75zM333 470h75v5.5h-75zM333 372h5.5v103.5h-5.5zM402.5 372h5.5v103.5h-5.5z" fill="url(#hatch)"/><g transform="translate(474,270.5)">
<path d="M-31 3.5 Q-17 7 -8 17 L8 17 Q17 7 31 3.5 Z" fill="#dcdcdc" stroke="#2a2a2a" stroke-width="0.9"/>
<path d="M-8 17 L-5.5 25.6 L5.5 25.6 L8 17 Z" fill="#e0e0e0" stroke="#2a2a2a" stroke-width="0.9"/>
<path d="M-43 1.75 L-41 0 L41 0 L43 1.75 L41 3.5 L-41 3.5 Z" fill="#7a7a7a" stroke="#333" stroke-width="0.8"/>
<rect x="-27" y="-1.2" width="8" height="1.8" rx=".9" fill="#3a3a3a"/><rect x="19" y="-1.2" width="8" height="1.8" rx=".9" fill="#3a3a3a"/>
<rect x="-31" y="3" width="4" height="2" rx="1" fill="#222"/><rect x="27" y="3" width="4" height="2" rx="1" fill="#222"/>
<rect x="-5" y="-9" width="9.7" height="9.2" rx="1.5" fill="#3d3d3d"/>
<path d="M-3.5 -5.5h6.7M-3.5 -2.5h6.7" stroke="#9a9a9a" stroke-width="1"/>
</g><g transform="translate(778.5,274)">
<path d="M-31 3.5 Q-17 7 -8 17 L8 17 Q17 7 31 3.5 Z" fill="#dcdcdc" stroke="#2a2a2a" stroke-width="0.9"/>
<path d="M-8 17 L-5.5 25.6 L5.5 25.6 L8 17 Z" fill="#e0e0e0" stroke="#2a2a2a" stroke-width="0.9"/>
<path d="M-43 1.75 L-41 0 L41 0 L43 1.75 L41 3.5 L-41 3.5 Z" fill="#7a7a7a" stroke="#333" stroke-width="0.8"/>
<rect x="-27" y="-1.2" width="8" height="1.8" rx=".9" fill="#3a3a3a"/><rect x="19" y="-1.2" width="8" height="1.8" rx=".9" fill="#3a3a3a"/>
<rect x="-31" y="3" width="4" height="2" rx="1" fill="#222"/><rect x="27" y="3" width="4" height="2" rx="1" fill="#222"/>
<rect x="-5" y="-9" width="9.7" height="9.2" rx="1.5" fill="#3d3d3d"/>
<path d="M-3.5 -5.5h6.7M-3.5 -2.5h6.7" stroke="#9a9a9a" stroke-width="1"/>
</g><g transform="translate(1137.8,274)">
<path d="M-31 3.5 Q-17 7 -8 17 L8 17 Q17 7 31 3.5 Z" fill="#dcdcdc" stroke="#2a2a2a" stroke-width="0.9"/>
<path d="M-8 17 L-5.5 25.6 L5.5 25.6 L8 17 Z" fill="#e0e0e0" stroke="#2a2a2a" stroke-width="0.9"/>
<path d="M-43 1.75 L-41 0 L41 0 L43 1.75 L41 3.5 L-41 3.5 Z" fill="#7a7a7a" stroke="#333" stroke-width="0.8"/>
<rect x="-27" y="-1.2" width="8" height="1.8" rx=".9" fill="#3a3a3a"/><rect x="19" y="-1.2" width="8" height="1.8" rx=".9" fill="#3a3a3a"/>
<rect x="-31" y="3" width="4" height="2" rx="1" fill="#222"/><rect x="27" y="3" width="4" height="2" rx="1" fill="#222"/>
<rect x="-5" y="-9" width="9.7" height="9.2" rx="1.5" fill="#3d3d3d"/>
<path d="M-3.5 -5.5h6.7M-3.5 -2.5h6.7" stroke="#9a9a9a" stroke-width="1"/>
</g><g transform="translate(340.6,377.7)">
<path d="M-2.5 67 L0 66 L0 84 L-2 82.5 Z" fill="#c8c8c8"/>
<path d="M48 4.4 L55.5 7 L55.5 87 L49 92 L48 91.6 Z" fill="#bababa"/>
<path d="M55.5 7 h6 v12 h-6 M55.5 66.5 h6 v12 h-6" fill="#e6e6e6" stroke="#c6c6c6" stroke-width="0.8"/>
<path d="M0 0 L48 4.4 L48 91.6 L0 84.2 Z" fill="#dddddd"/>
<path d="M0 0 L48 4.4 L48 91.6 L0 84.2 Z" fill="none" stroke="#cdcdcd" stroke-width="0.8"/>
<path d="M5 1v83M11 1.5v84M17 2v85M23 2.5v85.5M29 3v86M35 3.5v87M41 4v87" stroke="#d5d5d5" stroke-width="1.1"/>
<path d="M8 1v83M20 2v85M32 3v86M44 4v87" stroke="#e3e3e3" stroke-width="1.1"/>
<circle cx="42" cy="9" r="1" fill="#bbb"/>
</g><g transform="translate(638,382.5)">
<path d="M-2.5 67 L0 66 L0 84 L-2 82.5 Z" fill="#c8c8c8"/>
<path d="M48 4.4 L55.5 7 L55.5 87 L49 92 L48 91.6 Z" fill="#bababa"/>
<path d="M55.5 7 h6 v12 h-6 M55.5 66.5 h6 v12 h-6" fill="#e6e6e6" stroke="#c6c6c6" stroke-width="0.8"/>
<path d="M0 0 L48 4.4 L48 91.6 L0 84.2 Z" fill="#dddddd"/>
<path d="M0 0 L48 4.4 L48 91.6 L0 84.2 Z" fill="none" stroke="#cdcdcd" stroke-width="0.8"/>
<path d="M5 1v83M11 1.5v84M17 2v85M23 2.5v85.5M29 3v86M35 3.5v87M41 4v87" stroke="#d5d5d5" stroke-width="1.1"/>
<path d="M8 1v83M20 2v85M32 3v86M44 4v87" stroke="#e3e3e3" stroke-width="1.1"/>
<circle cx="42" cy="9" r="1" fill="#bbb"/>
</g><g transform="translate(1025.5,384.4)">
<path d="M-2.5 67 L0 66 L0 84 L-2 82.5 Z" fill="#c8c8c8"/>
<path d="M48 4.4 L55.5 7 L55.5 87 L49 92 L48 91.6 Z" fill="#bababa"/>
<path d="M55.5 7 h6 v12 h-6 M55.5 66.5 h6 v12 h-6" fill="#e6e6e6" stroke="#c6c6c6" stroke-width="0.8"/>
<path d="M0 0 L48 4.4 L48 91.6 L0 84.2 Z" fill="#dddddd"/>
<path d="M0 0 L48 4.4 L48 91.6 L0 84.2 Z" fill="none" stroke="#cdcdcd" stroke-width="0.8"/>
<path d="M5 1v83M11 1.5v84M17 2v85M23 2.5v85.5M29 3v86M35 3.5v87M41 4v87" stroke="#d5d5d5" stroke-width="1.1"/>
<path d="M8 1v83M20 2v85M32 3v86M44 4v87" stroke="#e3e3e3" stroke-width="1.1"/>
<circle cx="42" cy="9" r="1" fill="#bbb"/>
</g><path d="M390 464.3 H473.8 V262" fill="none" stroke="#222" stroke-width="2"/><path d="M688 469 H778.3 V266" fill="none" stroke="#222" stroke-width="2"/><path d="M1076 471.2 H1138 V266" fill="none" stroke="#222" stroke-width="2"/><rect x="333.1" y="372.4" width="5" height="5" rx="1" fill="#fff" stroke="#222" stroke-width="1.2"/><rect x="333.1" y="421.2" width="5" height="5" rx="1" fill="#fff" stroke="#222" stroke-width="1.2"/><rect x="333.1" y="470.3" width="5" height="5" rx="1" fill="#fff" stroke="#222" stroke-width="1.2"/><rect x="367.8" y="372.4" width="5" height="5" rx="1" fill="#fff" stroke="#222" stroke-width="1.2"/><rect x="367.8" y="470.3" width="5" height="5" rx="1" fill="#fff" stroke="#222" stroke-width="1.2"/><rect x="402.7" y="372.4" width="5" height="5" rx="1" fill="#fff" stroke="#222" stroke-width="1.2"/><rect x="402.7" y="421.2" width="5" height="5" rx="1" fill="#fff" stroke="#222" stroke-width="1.2"/><rect x="402.7" y="470.3" width="5" height="5" rx="1" fill="#fff" stroke="#222" stroke-width="1.2"/><path d="M480 294 L487 299" stroke="#aaa" stroke-width=".8" stroke-dasharray="1 1"/><path d="M784.5 297.5 L791.5 304" stroke="#aaa" stroke-width=".8" stroke-dasharray="1 1"/></svg>
<div style="position:absolute;left:482px;top:299px;width:41px;height:20px;background:#fff;border:1px solid #3a3aa8;box-sizing:border-box"></div>
<div style="position:absolute;left:522px;top:299px;width:34px;height:20px;background:#fff;border:1px solid #3a3aa8;box-sizing:border-box"></div>
<div style="position:absolute;left:482px;top:318px;width:41px;height:20px;background:#fff;border:1px solid #b3825a;box-sizing:border-box"></div>
<div style="position:absolute;left:482px;top:318px;width:41px;height:1px;background:#b05a3a"></div>
<div style="position:absolute;left:486.00px;top:302.60px;font-size:12.58px;line-height:14px;font-weight:normal;color:#2a2aa2;white-space:nowrap;transform:scaleY(1.09);">29.35</div>
<div style="position:absolute;left:526.00px;top:302.60px;font-size:13.10px;line-height:14px;font-weight:normal;color:#2a2aa2;white-space:nowrap;transform:scaleY(1.09);">1.57</div>
<div style="position:absolute;left:486.00px;top:321.60px;font-size:12.58px;line-height:14px;font-weight:normal;color:#a4502e;white-space:nowrap;transform:scaleY(1.09);">29.35</div>
<div style="position:absolute;left:787px;top:303.5px;width:41px;height:20px;background:#fff;border:1px solid #3a3aa8;box-sizing:border-box"></div>
<div style="position:absolute;left:827px;top:303.5px;width:34px;height:20px;background:#fff;border:1px solid #3a3aa8;box-sizing:border-box"></div>
<div style="position:absolute;left:787px;top:322.5px;width:41px;height:20px;background:#fff;border:1px solid #b3825a;box-sizing:border-box"></div>
<div style="position:absolute;left:787px;top:322.5px;width:41px;height:1px;background:#b05a3a"></div>
<div style="position:absolute;left:791.00px;top:307.10px;font-size:12.58px;line-height:14px;font-weight:normal;color:#2a2aa2;white-space:nowrap;transform:scaleY(1.09);">29.35</div>
<div style="position:absolute;left:831.00px;top:307.10px;font-size:13.10px;line-height:14px;font-weight:normal;color:#2a2aa2;white-space:nowrap;transform:scaleY(1.09);">1.57</div>
<div style="position:absolute;left:791.00px;top:326.10px;font-size:12.58px;line-height:14px;font-weight:normal;color:#a4502e;white-space:nowrap;transform:scaleY(1.09);">29.35</div>
<div style="position:absolute;left:1197px;top:121px;width:367px;height:458px;border:1px solid #c3c3c3;box-shadow:inset 1px 1px 0 #e6e6e6;box-sizing:border-box;background:#f0f0f0"></div>
<div style="position:absolute;left:1208.00px;top:120.90px;font-size:9.87px;line-height:14px;font-weight:normal;color:#333;white-space:nowrap;transform:scaleY(1.09);">Properties</div>
<svg style="position:absolute;left:1526px;top:123.3px" width="10" height="8" viewBox="0 0 10 8"><rect x="0.6" y="0.6" width="8.8" height="6.8" fill="none" stroke="#333" stroke-width="1.2"/><rect x="0.6" y="0.6" width="8.8" height="2" fill="#333"/></svg>
<svg style="position:absolute;left:1539px;top:123.3px" width="6" height="8" viewBox="0 0 6 8"><rect x="1.3" y="0" width="3.4" height="4.8" fill="#333"/><path d="M0 5h6" stroke="#333" stroke-width="1.3"/><path d="M3 5.5v2.8" stroke="#444" stroke-width="1"/></svg>
<svg style="position:absolute;left:1549px;top:123.3px" width="8" height="8" viewBox="0 0 8 8"><path d="M0.5 0.5l7 7M7.5 0.5l-7 7" stroke="#222" stroke-width="1.4"/></svg>
<div style="position:absolute;left:1276px;top:134px;width:69px;height:21px;background:#dedede"></div>
<div style="position:absolute;left:1200px;top:155px;width:361px;height:1px;background:#cfcfcf"></div>
<div style="position:absolute;left:1400px;top:135px;width:1px;height:20px;background:#e0e0e0"></div>
<div style="position:absolute;left:1466px;top:135px;width:1px;height:20px;background:#e0e0e0"></div>
<div style="position:absolute;left:1345px;top:135px;width:1px;height:20px;background:#e0e0e0"></div>
<svg style="position:absolute;left:1206px;top:138px" width="14" height="14" viewBox="0 0 14 14"><rect x="0" y="0" width="6" height="6" fill="#3c3c3c"/><rect x="7.5" y="0" width="6" height="6" fill="#4a8ac4"/><rect x="0" y="7.5" width="6" height="6" fill="#4a8ac4"/><rect x="7.5" y="7.5" width="6" height="6" fill="#3c3c3c"/><path d="M3 1.5v3M1.5 3h3M9 3h3M1.7 9.2l2.6 2.6M4.3 9.2l-2.6 2.6M9.2 10.2h2.5" stroke="#fff" stroke-width="1"/></svg>
<div style="position:absolute;left:1222.00px;top:137.80px;font-size:8.53px;line-height:14px;font-weight:normal;color:#3a3a3a;white-space:nowrap;transform:scaleY(1.09);">Calculations</div>
<svg style="position:absolute;left:1282px;top:138px" width="13" height="13" viewBox="0 0 13 13"><circle cx="6.5" cy="6.5" r="6.3" fill="#4a8ac4"/><circle cx="6.5" cy="6.5" r="2.3" fill="none" stroke="#fff" stroke-width="1.5"/><path d="M6.5 2v2M6.5 9v2M2 6.5h2M9 6.5h2M3.3 3.3l1.4 1.4M8.3 8.3l1.4 1.4M9.7 3.3l-1.4 1.4M4.7 8.3l-1.4 1.4" stroke="#fff" stroke-width="1.2"/></svg>
<div style="position:absolute;left:1297.00px;top:137.80px;font-size:8.89px;line-height:14px;font-weight:normal;color:#3a3a3a;white-space:nowrap;transform:scaleY(1.09);">Properties</div>
<svg style="position:absolute;left:1350px;top:137px" width="14" height="14" viewBox="0 0 14 14"><path d="M7 0.5l6.5 3.2l-6.5 3.2l-6.5-3.2z" fill="#3c3c3c"/><path d="M0.5 6.8l6.5 3.2l6.5-3.2M0.5 9.8l6.5 3.2l6.5-3.2" fill="none" stroke="#3c3c3c" stroke-width="1.6"/></svg>
<div style="position:absolute;left:1365.50px;top:137.80px;font-size:9.00px;line-height:14px;font-weight:normal;color:#3a3a3a;white-space:nowrap;transform:scaleY(1.09);">Layers</div>
<svg style="position:absolute;left:1404px;top:137px" width="14" height="14" viewBox="0 0 14 14"><path d="M1 13a0.5 0.5 0 0 1 0 0" stroke="#3c3c3c"/><circle cx="1.5" cy="12.5" r="1.5" fill="#3c3c3c"/><path d="M0.5 8a5.5 5.5 0 0 1 5.5 5.5M0.5 4.5a9 9 0 0 1 9 9M0.5 1a12.5 12.5 0 0 1 12.5 12.5" fill="none" stroke="#3c3c3c" stroke-width="1.6"/><path d="M9 1.5q2 1 4 0M9 4q2 1 4 0" stroke="#3c3c3c" stroke-width="1"/></svg>
<div style="position:absolute;left:1420.00px;top:137.80px;font-size:8.88px;line-height:14px;font-weight:normal;color:#3a3a3a;white-space:nowrap;transform:scaleY(1.09);">Prediction</div>
<div style="position:absolute;left:1203px;top:160px;width:356px;height:17px;background:#e4e4e4;border:1px solid #c9c9c9;box-sizing:border-box"></div>
<div style="position:absolute;left:1205.50px;top:162.20px;font-size:8.99px;line-height:14px;font-weight:normal;color:#222;white-space:nowrap;transform:scaleY(1.09);">Selection</div>
<svg style="position:absolute;left:1547px;top:166px" width="9" height="5" viewBox="0 0 9 5"><path d="M0.5 0.5l4 4l4-4" stroke="#444" stroke-width="1.2" fill="none"/></svg>
<div style="position:absolute;left:1203px;top:183px;width:356px;height:17px;background:#e4e4e4;border:1px solid #c9c9c9;box-sizing:border-box"></div>
<div style="position:absolute;left:1205.50px;top:185.20px;font-size:8.83px;line-height:14px;font-weight:normal;color:#222;white-space:nowrap;transform:scaleY(1.09);">MC (1)</div>
<svg style="position:absolute;left:1547px;top:189px" width="9" height="5" viewBox="0 0 9 5"><path d="M0.5 0.5l4 4l4-4" stroke="#444" stroke-width="1.2" fill="none"/></svg>
<div style="position:absolute;left:1204px;top:201px;width:48px;height:19px;border:1px solid #d0d0d0;border-bottom:none;box-sizing:border-box;background:#f0f0f0"></div>
<div style="position:absolute;left:1212.50px;top:204.10px;font-size:8.43px;line-height:14px;font-weight:normal;color:#333;white-space:nowrap;transform:scaleY(1.09);">General</div>
<div style="position:absolute;left:1260.50px;top:204.10px;font-size:8.51px;line-height:14px;font-weight:normal;color:#333;white-space:nowrap;transform:scaleY(1.09);">Up-link</div>
<div style="position:absolute;left:1304.50px;top:204.10px;font-size:8.54px;line-height:14px;font-weight:normal;color:#333;white-space:nowrap;transform:scaleY(1.09);">Down-link</div>
<div style="position:absolute;left:1204px;top:219px;width:354px;height:326px;border:1px solid #b0b0b0;border-top:2px solid #a9a9a9;box-sizing:border-box;background:#f0f0f0"></div>
<div style="position:absolute;left:1543px;top:221px;width:14px;height:323px;background:#e8e8e8"></div>
<div style="position:absolute;left:1543px;top:235px;width:14px;height:189px;background:#c8c8c8"></div>
<svg style="position:absolute;left:1545px;top:225px" width="9" height="5" viewBox="0 0 9 5"><path d="M0.5 4.5l4-4l4 4" stroke="#555" stroke-width="1.3" fill="none"/></svg>
<svg style="position:absolute;left:1545px;top:534px" width="9" height="5" viewBox="0 0 9 5"><path d="M0.5 0.5l4 4l4-4" stroke="#555" stroke-width="1.3" fill="none"/></svg>
<div style="position:absolute;left:1221.00px;top:222.10px;font-size:10.00px;line-height:14px;font-weight:bold;color:#2e2e2e;white-space:nowrap;transform:scaleY(1.09);">Information</div>
<svg style="position:absolute;left:1530px;top:226px" width="7" height="4" viewBox="0 0 7 4"><path d="M0 4l3.5-4l3.5 4z" fill="#555"/></svg>
<div style="position:absolute;left:1218px;top:236px;width:325px;height:13.5px;background:#f0f0f0"></div>
<div style="position:absolute;left:1374px;top:236px;width:169px;height:13.5px;background:#ffffff"></div>
<div style="position:absolute;left:1218px;top:248.5px;width:325px;height:1px;background:#d9d9d9"></div>
<div style="position:absolute;left:1233.00px;top:236.35px;font-size:8.80px;line-height:14px;font-weight:normal;color:#333;white-space:nowrap;transform:scaleY(1.09);">ID</div>
<div style="position:absolute;left:1377.00px;top:236.35px;font-size:8.80px;line-height:14px;font-weight:normal;color:#333;white-space:nowrap;transform:scaleY(1.09);">MC100</div>
<div style="position:absolute;left:1218px;top:249.5px;width:325px;height:14.0px;background:#f0f0f0"></div>
<div style="position:absolute;left:1374px;top:249.5px;width:169px;height:14.0px;background:#ffffff"></div>
<div style="position:absolute;left:1218px;top:262.5px;width:325px;height:1px;background:#d9d9d9"></div>
<div style="position:absolute;left:1233.00px;top:250.10px;font-size:8.80px;line-height:14px;font-weight:normal;color:#333;white-space:nowrap;transform:scaleY(1.09);">Manufacturer</div>
<div style="position:absolute;left:1377.00px;top:250.10px;font-size:8.80px;line-height:14px;font-weight:normal;color:#333;white-space:nowrap;transform:scaleY(1.09);">Generic</div>
<div style="position:absolute;left:1218px;top:263.5px;width:325px;height:13.800000000000011px;background:#f0f0f0"></div>
<div style="position:absolute;left:1374px;top:263.5px;width:169px;height:13.800000000000011px;background:#ffffff"></div>
<div style="position:absolute;left:1218px;top:276.3px;width:325px;height:1px;background:#d9d9d9"></div>
<div style="position:absolute;left:1233.00px;top:264.00px;font-size:8.80px;line-height:14px;font-weight:normal;color:#333;white-space:nowrap;transform:scaleY(1.09);">Model</div>
<div style="position:absolute;left:1377.00px;top:264.00px;font-size:8.78px;line-height:14px;font-weight:normal;color:#333;white-space:nowrap;transform:scaleY(1.09);">Remote Unit (Media Converter)</div>
<div style="position:absolute;left:1218px;top:277.3px;width:325px;height:14.0px;background:#f0f0f0"></div>
<div style="position:absolute;left:1374px;top:277.3px;width:169px;height:14.0px;background:#ffffff"></div>
<div style="position:absolute;left:1218px;top:290.3px;width:325px;height:1px;background:#d9d9d9"></div>
<div style="position:absolute;left:1233.00px;top:277.90px;font-size:8.80px;line-height:14px;font-weight:normal;color:#333;white-space:nowrap;transform:scaleY(1.09);">Category</div>
<div style="position:absolute;left:1377.00px;top:277.90px;font-size:8.80px;line-height:14px;font-weight:normal;color:#333;white-space:nowrap;transform:scaleY(1.09);">Active DAS</div>
<div style="position:absolute;left:1218px;top:291.3px;width:325px;height:13.899999999999977px;background:#f0f0f0"></div>
<div style="position:absolute;left:1374px;top:291.3px;width:169px;height:13.899999999999977px;background:#ffffff"></div>
<div style="position:absolute;left:1218px;top:304.2px;width:325px;height:1px;background:#d9d9d9"></div>
<div style="position:absolute;left:1233.00px;top:291.85px;font-size:8.80px;line-height:14px;font-weight:normal;color:#333;white-space:nowrap;transform:scaleY(1.09);">Subcategory</div>
<div style="position:absolute;left:1377.00px;top:291.85px;font-size:8.80px;line-height:14px;font-weight:normal;color:#333;white-space:nowrap;transform:scaleY(1.09);">Remote Unit</div>
<div style="position:absolute;left:1218px;top:305.2px;width:325px;height:14.0px;background:#f0f0f0"></div>
<div style="position:absolute;left:1374px;top:305.2px;width:169px;height:14.0px;background:#ffffff"></div>
<div style="position:absolute;left:1218px;top:318.2px;width:325px;height:1px;background:#d9d9d9"></div>
<div style="position:absolute;left:1233.00px;top:305.80px;font-size:8.80px;line-height:14px;font-weight:normal;color:#333;white-space:nowrap;transform:scaleY(1.09);">Type</div>
<div style="position:absolute;left:1377.00px;top:305.80px;font-size:8.80px;line-height:14px;font-weight:normal;color:#333;white-space:nowrap;transform:scaleY(1.09);">Media Converter</div>
<div style="position:absolute;left:1218px;top:319.2px;width:325px;height:14.300000000000011px;background:#f0f0f0"></div>
<div style="position:absolute;left:1374px;top:319.2px;width:169px;height:14.300000000000011px;background:#ffffff"></div>
<div style="position:absolute;left:1218px;top:332.5px;width:325px;height:1px;background:#d9d9d9"></div>
<div style="position:absolute;left:1233.00px;top:319.95px;font-size:8.80px;line-height:14px;font-weight:normal;color:#333;white-space:nowrap;transform:scaleY(1.09);">Status</div>
<div style="position:absolute;left:1377.00px;top:319.95px;font-size:8.80px;line-height:14px;font-weight:normal;color:#333;white-space:nowrap;transform:scaleY(1.09);">Approved</div>
<div style="position:absolute;left:1218px;top:333.5px;width:325px;height:14.899999999999977px;background:#f0f0f0"></div>
<div style="position:absolute;left:1374px;top:333.5px;width:169px;height:14.899999999999977px;background:#ffffff"></div>
<div style="position:absolute;left:1218px;top:347.4px;width:325px;height:1px;background:#d9d9d9"></div>
<div style="position:absolute;left:1233.00px;top:334.55px;font-size:8.80px;line-height:14px;font-weight:normal;color:#333;white-space:nowrap;transform:scaleY(1.09);">Subparts</div>
<div style="position:absolute;left:1218px;top:348.4px;width:325px;height:14.100000000000023px;background:#f0f0f0"></div>
<div style="position:absolute;left:1374px;top:348.4px;width:169px;height:14.100000000000023px;background:#ffffff"></div>
<div style="position:absolute;left:1218px;top:361.5px;width:325px;height:1px;background:#d9d9d9"></div>
<div style="position:absolute;left:1233.00px;top:349.05px;font-size:8.80px;line-height:14px;font-weight:normal;color:#333;white-space:nowrap;transform:scaleY(1.09);">Component group</div>
<div style="position:absolute;left:1377.00px;top:349.05px;font-size:8.80px;line-height:14px;font-weight:normal;color:#333;white-space:nowrap;transform:scaleY(1.09);">None</div>
<div style="position:absolute;left:1218px;top:236px;width:1px;height:126.5px;background:#c3c3c3"></div>
<div style="position:absolute;left:1218px;top:235.5px;width:325px;height:1px;background:#c8c8c8"></div>
<div style="position:absolute;left:1373.5px;top:236px;width:1px;height:126.5px;background:#dcdcdc"></div>
<div style="position:absolute;left:1205px;top:362px;width:338px;height:1px;background:#c9c9c9"></div>
<div style="position:absolute;left:1221.00px;top:364.35px;font-size:9.38px;line-height:14px;font-weight:bold;color:#2e2e2e;white-space:nowrap;transform:scaleY(1.09);">Active DAS Configuration</div>
<svg style="position:absolute;left:1530px;top:368px" width="7" height="4" viewBox="0 0 7 4"><path d="M0 4l3.5-4l3.5 4z" fill="#555"/></svg>
<div style="position:absolute;left:1218px;top:378px;width:325px;height:15px;background:#f0f0f0"></div>
<div style="position:absolute;left:1374px;top:378px;width:169px;height:15px;background:#ffffff"></div>
<div style="position:absolute;left:1218px;top:392px;width:325px;height:1px;background:#d9d9d9"></div>
<div style="position:absolute;left:1219px;top:378px;width:155px;height:14px;background:#dff0f7"></div>
<div style="position:absolute;left:1233.00px;top:379.10px;font-size:8.80px;line-height:14px;font-weight:normal;color:#333;white-space:nowrap;transform:scaleY(1.09);">Service groups</div>
<div style="position:absolute;left:1218px;top:393px;width:325px;height:15px;background:#f0f0f0"></div>
<div style="position:absolute;left:1374px;top:393px;width:169px;height:15px;background:#ffffff"></div>
<div style="position:absolute;left:1218px;top:407px;width:325px;height:1px;background:#d9d9d9"></div>
<div style="position:absolute;left:1233.00px;top:394.10px;font-size:8.80px;line-height:14px;font-weight:normal;color:#333;white-space:nowrap;transform:scaleY(1.09);">Zone</div>
<div style="position:absolute;left:1218px;top:378px;width:1px;height:30px;background:#c3c3c3"></div>
<div style="position:absolute;left:1205px;top:407.5px;width:338px;height:1px;background:#c9c9c9"></div>
<div style="position:absolute;left:1221.00px;top:410.10px;font-size:9.89px;line-height:14px;font-weight:bold;color:#2e2e2e;white-space:nowrap;transform:scaleY(1.09);">Electrical</div>
<div style="position:absolute;left:1218px;top:424px;width:325px;height:14px;background:#f0f0f0"></div>
<div style="position:absolute;left:1374px;top:424px;width:169px;height:14px;background:#ffffff"></div>
<div style="position:absolute;left:1218px;top:437px;width:325px;height:1px;background:#d9d9d9"></div>
<div style="position:absolute;left:1233.00px;top:424.60px;font-size:8.80px;line-height:14px;font-weight:normal;color:#333;white-space:nowrap;transform:scaleY(1.09);">Antenna type</div>
<div style="position:absolute;left:1218px;top:438px;width:325px;height:14px;background:#f0f0f0"></div>
<div style="position:absolute;left:1374px;top:438px;width:169px;height:14px;background:#ffffff"></div>
<div style="position:absolute;left:1218px;top:451px;width:325px;height:1px;background:#d9d9d9"></div>
<div style="position:absolute;left:1233.00px;top:438.60px;font-size:8.80px;line-height:14px;font-weight:normal;color:#333;white-space:nowrap;transform:scaleY(1.09);">Impedance</div>
<div style="position:absolute;left:1218px;top:424px;width:1px;height:28px;background:#c3c3c3"></div>
<div style="position:absolute;left:1205px;top:451.5px;width:338px;height:1px;background:#c9c9c9"></div>
<div style="position:absolute;left:1221.00px;top:453.60px;font-size:9.40px;line-height:14px;font-weight:bold;color:#2e2e2e;white-space:nowrap;transform:scaleY(1.09);">Generic</div>
<div style="position:absolute;left:1218px;top:467px;width:325px;height:14.5px;background:#f0f0f0"></div>
<div style="position:absolute;left:1374px;top:467px;width:169px;height:14.5px;background:#ffffff"></div>
<div style="position:absolute;left:1218px;top:480.5px;width:325px;height:1px;background:#d9d9d9"></div>
<div style="position:absolute;left:1233.00px;top:467.85px;font-size:8.80px;line-height:14px;font-weight:normal;color:#333;white-space:nowrap;transform:scaleY(1.09);">Construction Cost</div>
<div style="position:absolute;left:1218px;top:481.5px;width:325px;height:14.100000000000023px;background:#f0f0f0"></div>
<div style="position:absolute;left:1374px;top:481.5px;width:169px;height:14.100000000000023px;background:#ffffff"></div>
<div style="position:absolute;left:1218px;top:494.6px;width:325px;height:1px;background:#d9d9d9"></div>
<div style="position:absolute;left:1233.00px;top:482.15px;font-size:8.80px;line-height:14px;font-weight:normal;color:#333;white-space:nowrap;transform:scaleY(1.09);">Cost</div>
<div style="position:absolute;left:1377.00px;top:482.15px;font-size:8.80px;line-height:14px;font-weight:normal;color:#333;white-space:nowrap;transform:scaleY(1.09);">0.00 $</div>
<div style="position:absolute;left:1218px;top:495.6px;width:325px;height:14.0px;background:#f0f0f0"></div>
<div style="position:absolute;left:1374px;top:495.6px;width:169px;height:14.0px;background:#ffffff"></div>
<div style="position:absolute;left:1218px;top:508.6px;width:325px;height:1px;background:#d9d9d9"></div>
<div style="position:absolute;left:1233.00px;top:496.20px;font-size:8.80px;line-height:14px;font-weight:normal;color:#333;white-space:nowrap;transform:scaleY(1.09);">Id override</div>
<div style="position:absolute;left:1218px;top:509.6px;width:325px;height:13.799999999999955px;background:#f0f0f0"></div>
<div style="position:absolute;left:1374px;top:509.6px;width:169px;height:13.799999999999955px;background:#ffffff"></div>
<div style="position:absolute;left:1218px;top:522.4px;width:325px;height:1px;background:#d9d9d9"></div>
<div style="position:absolute;left:1233.00px;top:510.10px;font-size:8.80px;line-height:14px;font-weight:normal;color:#333;white-space:nowrap;transform:scaleY(1.09);">Inventory #</div>
<div style="position:absolute;left:1218px;top:523.4px;width:325px;height:13.800000000000068px;background:#f0f0f0"></div>
<div style="position:absolute;left:1374px;top:523.4px;width:169px;height:13.800000000000068px;background:#ffffff"></div>
<div style="position:absolute;left:1218px;top:536.2px;width:325px;height:1px;background:#d9d9d9"></div>
<div style="position:absolute;left:1233.00px;top:523.90px;font-size:8.80px;line-height:14px;font-weight:normal;color:#333;white-space:nowrap;transform:scaleY(1.09);">IP Address</div>
<div style="position:absolute;left:1377.00px;top:523.90px;font-size:8.80px;line-height:14px;font-weight:normal;color:#333;white-space:nowrap;transform:scaleY(1.09);">0.0.0.0</div>
<div style="position:absolute;left:1218px;top:537.2px;width:325px;height:13.799999999999955px;background:#f0f0f0"></div>
<div style="position:absolute;left:1374px;top:537.2px;width:169px;height:13.799999999999955px;background:#ffffff"></div>
<div style="position:absolute;left:1218px;top:550px;width:325px;height:1px;background:#d9d9d9"></div>
<div style="position:absolute;left:1233.00px;top:537.70px;font-size:8.80px;line-height:14px;font-weight:normal;color:#333;white-space:nowrap;transform:scaleY(1.09);">Impact on site</div>
<div style="position:absolute;left:1377.00px;top:537.70px;font-size:8.80px;line-height:14px;font-weight:normal;color:#333;white-space:nowrap;transform:scaleY(1.09);">True</div>
<div style="position:absolute;left:1218px;top:467px;width:1px;height:77px;background:#c3c3c3"></div>
<div style="position:absolute;left:1205px;top:544px;width:352px;height:1px;background:#b0b0b0"></div>
<div style="position:absolute;left:1205px;top:545px;width:352px;height:8px;background:#f0f0f0"></div>
<div style="position:absolute;left:1374px;top:378px;width:168px;height:15px;background:#fff;border:1px dotted #888;box-sizing:border-box"></div>
<div style="position:absolute;left:1377.00px;top:379.10px;font-size:8.30px;line-height:14px;font-weight:normal;color:#333;white-space:nowrap;transform:scaleY(1.09);">New Group</div>
<div style="position:absolute;left:1530px;top:379px;width:11.5px;height:13.5px;background:#c9c9c9"></div>
<svg style="position:absolute;left:1533px;top:384px" width="6" height="4" viewBox="0 0 6 4"><path d="M0 0h6l-3 3.5z" fill="#333"/></svg>
<div style="position:absolute;left:1374px;top:393px;width:168px;height:97.5px;background:#f0f0f0;border:1px solid #b5b5b5;box-sizing:border-box"></div>
<div style="position:absolute;left:1375px;top:406.5px;width:166px;height:55.5px;background:#fff"></div>
<div style="position:absolute;left:1375px;top:393.5px;width:166px;height:13px;background:#e5e5e5;border:1px dotted #555;box-sizing:border-box"></div>
<div style="position:absolute;left:1375px;top:461.5px;width:166px;height:1px;background:#d8d8d8"></div>
<div style="position:absolute;left:1377.5px;top:394.9px;width:11px;height:11px;background:#fff;border:1px solid #b8b8b8;box-sizing:border-box"></div>
<div style="position:absolute;left:1380px;top:397.4px;width:6px;height:6px;background:#555"></div>
<div style="position:absolute;left:1393.50px;top:393.50px;font-size:8.80px;line-height:14px;font-weight:normal;color:#333;white-space:nowrap;transform:scaleY(1.09);">(Select All)</div>
<div style="position:absolute;left:1377.5px;top:409.2px;width:11px;height:11px;background:#fff;border:1px solid #b8b8b8;box-sizing:border-box"></div>
<div style="position:absolute;left:1393.50px;top:407.80px;font-size:8.80px;line-height:14px;font-weight:normal;color:#333;white-space:nowrap;transform:scaleY(1.09);">Test</div>
<div style="position:absolute;left:1377.5px;top:423px;width:11px;height:11px;background:#fff;border:1px solid #b8b8b8;box-sizing:border-box"></div>
<div style="position:absolute;left:1393.50px;top:421.60px;font-size:8.80px;line-height:14px;font-weight:normal;color:#333;white-space:nowrap;transform:scaleY(1.09);">Path1</div>
<div style="position:absolute;left:1377.5px;top:436.8px;width:11px;height:11px;background:#fff;border:1px solid #b8b8b8;box-sizing:border-box"></div>
<div style="position:absolute;left:1393.50px;top:435.40px;font-size:8.80px;line-height:14px;font-weight:normal;color:#333;white-space:nowrap;transform:scaleY(1.09);">SISO</div>
<div style="position:absolute;left:1377.5px;top:450.7px;width:11px;height:11px;background:#fff;border:1px solid #b8b8b8;box-sizing:border-box"></div>
<svg style="position:absolute;left:1379px;top:451.7px" width="9" height="8" viewBox="0 0 9 8"><path d="M0.5 4l3 3l5-6.5" stroke="#666" stroke-width="1.1" fill="none"/></svg>
<div style="position:absolute;left:1393.50px;top:449.30px;font-size:8.80px;line-height:14px;font-weight:normal;color:#333;white-space:nowrap;transform:scaleY(1.09);">New Group</div>
<div style="position:absolute;left:1447px;top:467px;width:43px;height:18px;background:#f0f0f0;border:1px solid #b8b8b8;box-sizing:border-box"></div>
<div style="position:absolute;left:1462.50px;top:469.60px;font-size:8.30px;line-height:14px;font-weight:normal;color:#333;white-space:nowrap;transform:scaleY(1.09);">OK</div>
<div style="position:absolute;left:1494px;top:467px;width:44px;height:18px;background:#f0f0f0;border:1px solid #b8b8b8;box-sizing:border-box"></div>
<div style="position:absolute;left:1502.50px;top:469.60px;font-size:8.35px;line-height:14px;font-weight:normal;color:#333;white-space:nowrap;transform:scaleY(1.09);">Cancel</div>
<svg style="position:absolute;left:1376px;top:482px" width="7" height="7" viewBox="0 0 7 7"><path d="M0 0h1v1h-1zM2 2h1v1h-1zM0 2h1v1h-1zM0 4h1v1h-1zM2 4h1v1h-1zM4 4h1v1h-1zM0 6h1v1h-1zM2 6h1v1h-1zM4 6h1v1h-1zM6 6h1v1h-1z" fill="#555"/></svg>
<div style="position:absolute;left:1430px;top:548px;width:59px;height:20px;background:#cfcfcf;border:1px dotted #a8a8a8;box-sizing:border-box"></div>
<div style="position:absolute;left:1448.00px;top:551.60px;font-size:9.19px;line-height:14px;font-weight:normal;color:#9e9e9e;white-space:nowrap;transform:scaleY(1.09);">Apply</div>
<div style="position:absolute;left:1496px;top:548px;width:59px;height:20px;background:#cfcfcf;border:1px dotted #a8a8a8;box-sizing:border-box"></div>
<div style="position:absolute;left:1512.50px;top:551.60px;font-size:8.35px;line-height:14px;font-weight:normal;color:#9e9e9e;white-space:nowrap;transform:scaleY(1.09);">Cancel</div>
<div style="position:absolute;left:1197px;top:583px;width:367px;height:226px;border:1px solid #c3c3c3;box-shadow:inset 1px 1px 0 #e6e6e6;box-sizing:border-box;background:#f0f0f0"></div>
<div style="position:absolute;left:1208.00px;top:583.10px;font-size:9.65px;line-height:14px;font-weight:normal;color:#333;white-space:nowrap;transform:scaleY(1.09);">Systems</div>
<svg style="position:absolute;left:1526px;top:585.5px" width="10" height="8" viewBox="0 0 10 8"><rect x="0.6" y="0.6" width="8.8" height="6.8" fill="none" stroke="#333" stroke-width="1.2"/><rect x="0.6" y="0.6" width="8.8" height="2" fill="#333"/></svg>
<svg style="position:absolute;left:1539px;top:585.5px" width="6" height="8" viewBox="0 0 6 8"><rect x="1.3" y="0" width="3.4" height="4.8" fill="#333"/><path d="M0 5h6" stroke="#333" stroke-width="1.3"/><path d="M3 5.5v2.8" stroke="#444" stroke-width="1"/></svg>
<svg style="position:absolute;left:1549px;top:585.5px" width="8" height="8" viewBox="0 0 8 8"><path d="M0.5 0.5l7 7M7.5 0.5l-7 7" stroke="#222" stroke-width="1.4"/></svg>
<div style="position:absolute;left:1202px;top:596px;width:61px;height:21.5px;background:#dedede"></div>
<div style="position:absolute;left:1311px;top:597px;width:1px;height:20px;background:#e0e0e0"></div>
<div style="position:absolute;left:1200px;top:617px;width:361px;height:1px;background:#cfcfcf"></div>
<svg style="position:absolute;left:1206px;top:600px" width="14" height="14" viewBox="0 0 14 14"><path d="M2 2l5 5M12 2l-5 5M2 12l5-5M12 12l-5-5M7 7v-6" stroke="#3c3c3c" stroke-width="1.3"/><circle cx="7" cy="7" r="2.8" fill="#3c3c3c"/><circle cx="2" cy="2" r="1.8" fill="#3c3c3c"/><circle cx="12" cy="2.5" r="1.8" fill="#3c3c3c"/><circle cx="2" cy="12" r="1.8" fill="#3c3c3c"/><circle cx="12" cy="12" r="1.8" fill="#3c3c3c"/></svg>
<div style="position:absolute;left:1222.50px;top:600.40px;font-size:8.61px;line-height:14px;font-weight:normal;color:#333;white-space:nowrap;transform:scaleY(1.09);">Systems</div>
<svg style="position:absolute;left:1267px;top:599px" width="14" height="15" viewBox="0 0 14 15"><path d="M4 1h6v4h3v9h-12v-8h3z" fill="none" stroke="#3c3c3c" stroke-width="1.5"/><path d="M4 6h6v5h-6z" fill="none" stroke="#3c3c3c" stroke-width="1.2"/></svg>
<div style="position:absolute;left:1283.50px;top:600.40px;font-size:8.39px;line-height:14px;font-weight:normal;color:#333;white-space:nowrap;transform:scaleY(1.09);">Plans</div>
<svg style="position:absolute;left:1202px;top:621px" width="14" height="14" viewBox="0 0 14 14"><circle cx="7" cy="7" r="6.6" fill="#4a8ac4"/><path d="M7 3.3v7.4M3.3 7h7.4" stroke="#fff" stroke-width="1.8"/></svg>
<svg style="position:absolute;left:1222px;top:621px" width="14" height="14" viewBox="0 0 14 14"><circle cx="7" cy="7" r="6.6" fill="#4a8ac4"/><path d="M3.3 7h7.4" stroke="#fff" stroke-width="1.8"/></svg>
<svg style="position:absolute;left:1242px;top:621px" width="14" height="14" viewBox="0 0 14 14"><circle cx="7" cy="7" r="6.6" fill="#c9c9c9"/><circle cx="7" cy="7" r="3.2" fill="none" stroke="#e9e9e9" stroke-width="1.3"/><path d="M7 1.5v2.5M7 10v2.5M1.5 7h2.5M10 7h2.5" stroke="#e9e9e9" stroke-width="1.3"/></svg>
<div style="position:absolute;left:1261px;top:622px;width:1px;height:13px;background:#d8d8d8"></div>
<svg style="position:absolute;left:1267px;top:621px" width="14" height="14" viewBox="0 0 14 14"><circle cx="7" cy="7" r="6.6" fill="#4a8ac4"/><circle cx="4.3" cy="9.7" r="1.1" fill="#fff"/><path d="M3.5 6.3a4.2 4.2 0 0 1 4.2 4.2M3.5 3.7a6.8 6.8 0 0 1 6.8 6.8" fill="none" stroke="#fff" stroke-width="1.2"/></svg>
<div style="position:absolute;left:1286px;top:622px;width:1px;height:13px;background:#d8d8d8"></div>
<svg style="position:absolute;left:1292px;top:622px" width="14" height="13" viewBox="0 0 14 13"><path d="M0 6.5h14" stroke="#3c3c3c" stroke-width="1.3"/><path d="M4 4.5l3-3.5l3 3.5zM4 8.5l3 3.5l3-3.5z" fill="#4a8ac4"/></svg>
<svg style="position:absolute;left:1312px;top:627px" width="6" height="4" viewBox="0 0 6 4"><path d="M0 0h6l-3 3z" fill="#3c3c3c"/></svg>
<div style="position:absolute;left:1200px;top:639px;width:362px;height:169px;background:#fff;border:1px solid #bdbdbd;box-sizing:border-box"></div>
<div style="position:absolute;left:1201px;top:640px;width:360px;height:15px;background:#efefef;border-bottom:1px solid #d5d5d5;box-sizing:border-box"></div>
<div style="position:absolute;left:1215px;top:655.5px;width:346px;height:14.5px;background:#dcdcdc"></div>
<svg style="position:absolute;left:1205px;top:660.5px" width="6" height="6" viewBox="0 0 6 6"><path d="M5 0.5v5h-5z" fill="#444"/></svg>
<div style="position:absolute;left:1217.50px;top:656.60px;font-size:8.89px;line-height:14px;font-weight:normal;color:#222;white-space:nowrap;transform:scaleY(1.09);">Project - New Project</div>
<svg style="position:absolute;left:1220px;top:675.5px" width="6" height="6" viewBox="0 0 6 6"><path d="M5 0.5v5h-5z" fill="#444"/></svg>
<div style="position:absolute;left:1232.60px;top:671.60px;font-size:9.31px;line-height:14px;font-weight:normal;color:#333;white-space:nowrap;transform:scaleY(1.09);">Operator 1</div>
<svg style="position:absolute;left:1235px;top:688.5px" width="5" height="8" viewBox="0 0 5 8"><path d="M0.5 0.5l3.5 3.5l-3.5 3.5z" fill="#333"/></svg>
<div style="position:absolute;left:1248.00px;top:686.10px;font-size:8.44px;line-height:14px;font-weight:normal;color:#333;white-space:nowrap;transform:scaleY(1.09);">850 MHz - Cellular - LTE</div>
<svg style="position:absolute;left:1235px;top:703.2px" width="5" height="8" viewBox="0 0 5 8"><path d="M0.5 0.5l3.5 3.5l-3.5 3.5z" fill="#333"/></svg>
<div style="position:absolute;left:1248.00px;top:700.80px;font-size:8.48px;line-height:14px;font-weight:normal;color:#333;white-space:nowrap;transform:scaleY(1.09);">2100 MHz - AWS - LTE</div>
<svg style="position:absolute;left:1220px;top:719px" width="6" height="6" viewBox="0 0 6 6"><path d="M5 0.5v5h-5z" fill="#444"/></svg>
<div style="position:absolute;left:1232.60px;top:715.20px;font-size:9.31px;line-height:14px;font-weight:normal;color:#333;white-space:nowrap;transform:scaleY(1.09);">Operator 2</div>
<svg style="position:absolute;left:1235px;top:732.4px" width="5" height="8" viewBox="0 0 5 8"><path d="M0.5 0.5l3.5 3.5l-3.5 3.5z" fill="#333"/></svg>
<div style="position:absolute;left:1248.00px;top:730.00px;font-size:8.42px;line-height:14px;font-weight:normal;color:#333;white-space:nowrap;transform:scaleY(1.09);">850 MHz - Cellular - WCDMA</div>
<svg style="position:absolute;left:1235px;top:747px" width="5" height="8" viewBox="0 0 5 8"><path d="M0.5 0.5l3.5 3.5l-3.5 3.5z" fill="#333"/></svg>
<div style="position:absolute;left:1248.00px;top:744.60px;font-size:8.34px;line-height:14px;font-weight:normal;color:#333;white-space:nowrap;transform:scaleY(1.09);">1900 MHz - PCS - LTE</div>
<svg style="position:absolute;left:1235px;top:761.7px" width="5" height="8" viewBox="0 0 5 8"><path d="M0.5 0.5l3.5 3.5l-3.5 3.5z" fill="#333"/></svg>
<div style="position:absolute;left:1248.00px;top:759.30px;font-size:8.28px;line-height:14px;font-weight:normal;color:#333;white-space:nowrap;transform:scaleY(1.09);">1900 MHz - PCS - WCDMA</div>
<div style="position:absolute;left:1229.5px;top:670px;width:1px;height:100px;border-left:1px dotted #e0e0e0"></div>
<div style="position:absolute;left:2px;top:812px;width:1562px;height:13px;border:1px solid #c3c3c3;box-sizing:border-box;background:#f0f0f0"></div>
<div style="position:absolute;left:12.40px;top:811.90px;font-size:9.67px;line-height:14px;font-weight:normal;color:#444;white-space:nowrap;transform:scaleY(1.09);">Debug Message List</div>
<svg style="position:absolute;left:1539px;top:814.5px" width="6" height="8" viewBox="0 0 6 8"><rect x="1.3" y="0" width="3.4" height="4.8" fill="#333"/><path d="M0 5h6" stroke="#333" stroke-width="1.3"/><path d="M3 5.5v2.8" stroke="#444" stroke-width="1"/></svg>
<svg style="position:absolute;left:1549px;top:814.5px" width="8" height="8" viewBox="0 0 8 8"><path d="M0.5 0.5l7 7M7.5 0.5l-7 7" stroke="#222" stroke-width="1.4"/></svg>
<div style="position:absolute;left:5.70px;top:831.60px;font-size:8.90px;line-height:14px;font-weight:normal;color:#444;white-space:nowrap;transform:scaleY(1.09);">Tool:</div>
<div style="position:absolute;left:168.00px;top:831.60px;font-size:9.12px;line-height:14px;font-weight:normal;color:#444;white-space:nowrap;transform:scaleY(1.09);">Position = [2184,499]</div>
<div style="position:absolute;left:267.50px;top:831.60px;font-size:9.02px;line-height:14px;font-weight:normal;color:#444;white-space:nowrap;transform:scaleY(1.09);">Equip.Cost= $0.00</div>
<svg style="position:absolute;left:431px;top:831px" width="14" height="14" viewBox="0 0 14 14"><circle cx="7" cy="7" r="6.8" fill="#b4513a"/><rect x="6" y="2.8" width="2" height="5.5" fill="#fff"/><rect x="6" y="9.6" width="2" height="2" fill="#fff"/></svg>
<div style="position:absolute;left:448.00px;top:831.60px;font-size:9.00px;line-height:14px;font-weight:normal;color:#444;white-space:nowrap;transform:scaleY(1.09);">Errors : 2</div>
<div style="position:absolute;left:546.00px;top:831.60px;font-size:8.97px;line-height:14px;font-weight:normal;color:#444;white-space:nowrap;transform:scaleY(1.09);">Warnings : 0</div>
<div style="position:absolute;left:626.50px;top:831.60px;font-size:8.74px;line-height:14px;font-weight:normal;color:#444;white-space:nowrap;transform:scaleY(1.09);">Page size= 36 inch x 24 inch</div>
<div style="position:absolute;left:830.60px;top:831.60px;font-size:8.60px;line-height:14px;font-weight:normal;color:#444;white-space:nowrap;transform:scaleY(1.09);">DB synchronized at 1:17 PM from Shared DB.</div>
<div style="position:absolute;left:1018.00px;top:831.60px;font-size:9.18px;line-height:14px;font-weight:normal;color:#444;white-space:nowrap;transform:scaleY(1.09);">Version: 12.0.0.55</div>
</body></html>
